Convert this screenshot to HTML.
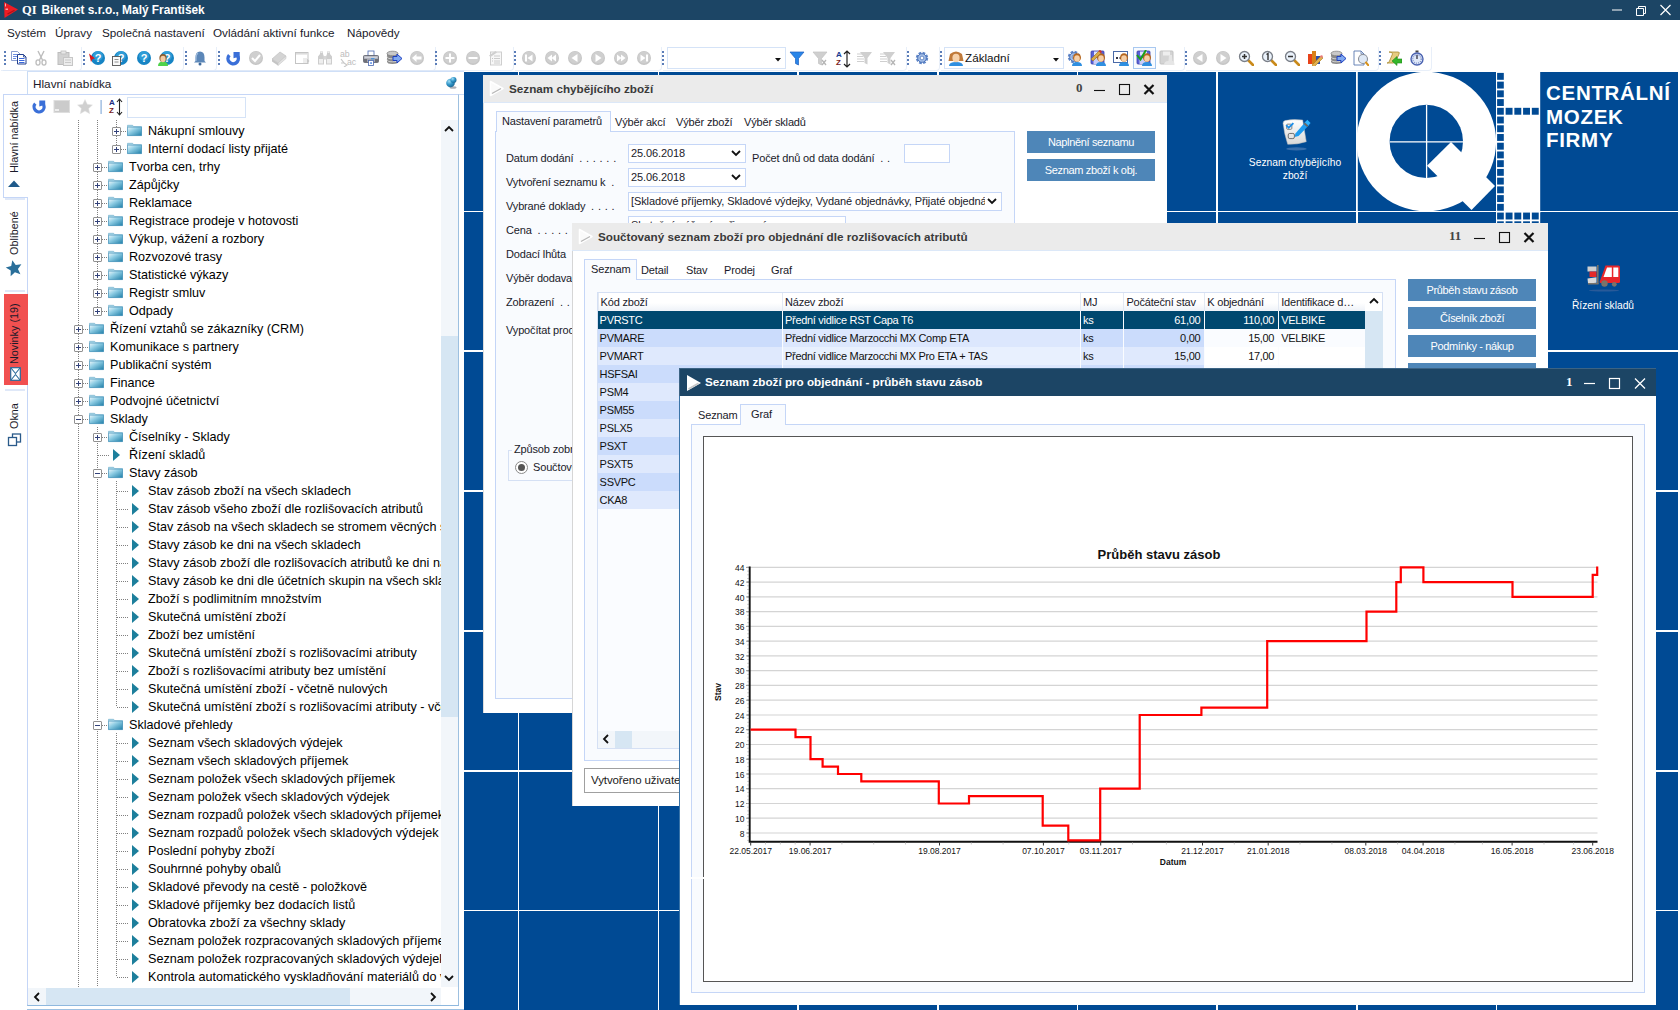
<!DOCTYPE html>
<html><head><meta charset="utf-8"><title>QI</title>
<style>
*{box-sizing:border-box;margin:0;padding:0}
html,body{width:1680px;height:1010px;overflow:hidden;background:#fff;font-family:"Liberation Sans",sans-serif;font-size:12px;color:#1a1a1a}
.abs{position:absolute}
#titlebar{position:absolute;left:0;top:0;width:1680px;height:20px;background:#1c4565}
#titlebar .t{position:absolute;left:21px;top:3px;color:#fff;font-weight:bold;font-size:11.9px;white-space:pre}
#menubar{position:absolute;left:0;top:20px;width:1680px;height:26px;background:#fff}
#menubar span{position:absolute;top:6px;font-size:11.7px;color:#1a1a2a;white-space:nowrap}
#toolbar{position:absolute;left:0;top:46px;width:1680px;height:26px;background:#fff}
#mdi{position:absolute;left:464px;top:72px;width:1216px;height:938px;background:#004a94;overflow:hidden}
.gl{position:absolute;background:#fff}
#left{position:absolute;left:0;top:72px;width:464px;height:938px;background:#fff}
#tbline{position:absolute;left:3px;top:70px;width:461px;height:1px;background:#dfe9f8}
.win{position:absolute;background:#fff}
.wt{position:absolute;left:0;top:0;right:0;height:28px;background:#ebebeb;border-bottom:1px solid #dce8f8}
.wt .cap{position:absolute;left:26px;top:7px;font-weight:bold;font-size:11.7px;color:#3a3a3a;white-space:nowrap}

#left .hdr{position:absolute;left:27px;top:-1px;width:437px;height:24px;border-left:1px solid #c9dcf5;border-bottom:1px solid #c9dcf5;border-top:1px solid #cfdff7;background:#fff}
#left .hdr span{position:absolute;left:5px;top:5px;font-size:11.75px;color:#1a1a2a}
#left .pane{position:absolute;left:27px;top:22px;width:432px;height:912px;border:1px solid #c5d6f7;border-right-color:#9dc0e0;border-bottom:2px solid #8fb8de;background:#fff}
#tree{position:absolute;left:28px;top:48px;width:413px;height:867px;overflow:hidden;background:#fff}
.tr{position:absolute;left:0;height:18px;font-size:12.6px;line-height:18px;white-space:nowrap;color:#000}
.dv{position:absolute;width:1px;background-image:linear-gradient(#808080 50%,transparent 50%);background-size:1px 2px}
.dh{position:absolute;height:1px;background-image:linear-gradient(90deg,#808080 50%,transparent 50%);background-size:2px 1px}
.pm{position:absolute;width:9px;height:9px;border:1px solid #919191;background:#fff;border-radius:1px}
.pm i{position:absolute;left:1px;top:3px;width:5px;height:1px;background:#33427a}
.pm b{position:absolute;left:3px;top:1px;width:1px;height:5px;background:#33427a}
.fo{position:absolute;width:15px;height:12.500px}
.ar{position:absolute;width:0;height:0;border-left:7px solid #1d7f9c;border-top:6px solid transparent;border-bottom:6px solid transparent}
.vt{position:absolute;transform-origin:0 0;transform:rotate(-90deg);white-space:nowrap;line-height:13px;display:block}
.vtab span{position:absolute;left:0;top:0;transform-origin:0 0;transform:rotate(-90deg);white-space:nowrap;font-size:10.8px;color:#1a1a2a;display:block}

.tile{position:absolute;color:#fff;font-size:10.25px;text-align:center;line-height:13px;white-space:nowrap}

.wicon{position:absolute;left:6px;top:5px}
.wctl{position:absolute;top:0;height:27px}
.num{position:absolute;font-family:"Liberation Serif",serif;font-weight:bold;font-size:13px;color:#444}
.tabs span{position:absolute;font-size:11px;color:#1a1a2a;white-space:nowrap;letter-spacing:-0.15px}
.tabon{position:absolute;background:#f9fbfe;border:1px solid #c5d6f7;border-bottom:none}
.page{position:absolute;background:#f9fbfe;border:1px solid #c5d6f7}
.lbl{position:absolute;font-size:11px;color:#1a1a2a;white-space:pre;letter-spacing:-0.15px}
.lbl i{font-style:normal;letter-spacing:0.35px}
.fld{position:absolute;background:#fff;border:1px solid #c5d6f7;font-size:11px;color:#1a1a2a;white-space:nowrap;overflow:hidden;letter-spacing:-0.1px}
.fld span{position:absolute;left:2px;top:2px}
.btn{position:absolute;background:#4e86b8;color:#fff;font-size:11px;text-align:center;white-space:nowrap;letter-spacing:-0.35px}
.chev{position:absolute}

.th{position:absolute;top:0;height:18px;font-size:11px;line-height:19px;color:#1a1a2a;white-space:nowrap;overflow:hidden;padding-left:2px;letter-spacing:-0.2px;background:linear-gradient(#fff,#fff 55%,#eef2f8);border-left:1px solid #e3e9f3}
.td{position:absolute;height:18px;font-size:11px;line-height:18px;color:#111;white-space:nowrap;overflow:hidden;letter-spacing:-0.3px}


.grip{position:absolute;top:4.700px;width:2px;height:14px;background-image:linear-gradient(#5b7db8 50%,transparent 50%);background-size:2px 4px}
.tbg{position:absolute;top:1px;height:24px;border:1px solid #e8eff9;border-top:none;border-left:none;border-radius:0 0 4px 0}
.ic{position:absolute;top:4px;width:16px;height:16px}
.tcombo{position:absolute;top:1px;height:22px;border:1px solid #d5e3f7;background:#fff}
</style></head><body>
<div id="titlebar"><svg class="abs" style="left:2px;top:1px" width="18" height="18" viewBox="0 0 18 18"><path d="M2 1L16 8.500L2.500 17z" fill="#ed1c24"/><path d="M5.500 13L12.500 9.300" stroke="#b01018" stroke-width="1.300"/><rect x="3" y="2.500" width="1" height="3" fill="#f8b0b0"/><rect x="3.500" y="7.500" width="2.500" height="1.500" fill="#f7a0a0"/></svg><div class="t"><span style="font-family:'Liberation Serif',serif;font-size:12.5px;position:absolute;left:1px;top:-0.5px">QI</span><span style="position:absolute;left:20.5px;top:0">Bikenet s.r.o., Malý František</span></div><svg class="abs" style="left:1610.5px;top:3px" width="66" height="14" viewBox="0 0 66 14"><path d="M1 7h10" stroke="#fff" stroke-width="1"/><path d="M25.500 5.500h7v7h-7zM27.500 5.500v-2h7v7h-2" fill="none" stroke="#fff" stroke-width="1"/><path d="M49.500 2l10 10M59.500 2l-10 10" stroke="#fff" stroke-width="1.200"/></svg></div>
<div id="menubar"><span style="left:7px">Systém</span><span style="left:55px">Úpravy</span><span style="left:102px">Společná nastavení</span><span style="left:213px">Ovládání aktivní funkce</span><span style="left:347px">Nápovědy</span></div>
<div id="toolbar"><div class="tbg" style="left:1px;width:81px"></div>
<div class="tbg" style="left:83px;width:101px"></div>
<div class="tbg" style="left:185px;width:32px"></div>
<div class="tbg" style="left:218px;width:218px"></div>
<div class="tbg" style="left:437px;width:77px"></div>
<div class="tbg" style="left:515px;width:147px"></div>
<div class="tbg" style="left:663px;width:244px"></div>
<div class="tbg" style="left:908px;width:32px"></div>
<div class="tbg" style="left:941px;width:244px"></div>
<div class="tbg" style="left:1186px;width:193px"></div>
<div class="tbg" style="left:1380px;width:52px"></div>
<div class="grip" style="left:4px"></div>
<div class="grip" style="left:83px"></div>
<div class="grip" style="left:185px"></div>
<div class="grip" style="left:218px"></div>
<div class="grip" style="left:435px"></div>
<div class="grip" style="left:514px"></div>
<div class="grip" style="left:662px"></div>
<div class="grip" style="left:907px"></div>
<div class="grip" style="left:940px"></div>
<div class="grip" style="left:1185px"></div>
<div class="grip" style="left:1379px"></div>
<svg class="ic" style="left:10.5px;width:16px" viewBox="0 0 16 16"><path d="M.5 1.500h6l2.500 2.500v6.500h-8.500z" fill="#fff" stroke="#6d86c4" stroke-width=".8"/><path d="M2 4.500h4.500M2 6.500h4.500M2 8.500h3" stroke="#5a80e0" stroke-width=".9"/><path d="M6.500 4.500h6l2.500 2.500v7h-8.500z" fill="#fff" stroke="#23408f" stroke-width="1"/><path d="M12.500 4.500v2.500h2.500" fill="none" stroke="#23408f" stroke-width=".8"/><path d="M8 8.500h5.500M8 10.500h5.500M8 12.500h5.500" stroke="#3a68dc" stroke-width="1"/></svg>
<svg class="ic" style="left:33.0px;width:16px" viewBox="0 0 16 16"><path d="M5 1l4.500 9M11 1L6.500 10" stroke="#bdbdbd" stroke-width="1.400" fill="none"/><ellipse cx="5" cy="12.500" rx="2" ry="2.600" fill="none" stroke="#bdbdbd" stroke-width="1.300"/><ellipse cx="11" cy="12.500" rx="2" ry="2.600" fill="none" stroke="#bdbdbd" stroke-width="1.300"/></svg>
<svg class="ic" style="left:57.0px;width:16px" viewBox="0 0 16 16"><rect x="1" y="2.500" width="11" height="12" fill="#d2d2d2" stroke="#bdbdbd"/><rect x="4" y="1" width="5" height="3" fill="#e8e8e8" stroke="#bdbdbd" stroke-width=".8"/><rect x="6.500" y="7.500" width="9" height="8" fill="#ececec" stroke="#c6c6c6"/><path d="M8 10h6M8 12.500h6" stroke="#c9c9c9"/></svg>
<svg class="ic" style="left:89.3px;width:18px" viewBox="0 0 18 16"><circle cx="9" cy="8" r="7" fill="#1684c4"/><circle cx="9" cy="6" r="5" fill="#3aa6de" opacity=".7"/><text x="9" y="12" font-size="11" font-weight="bold" fill="#fff" text-anchor="middle" font-family="Liberation Sans">?</text><path d="M0 3.500l6 5-2.500.5-1.500 3z" fill="#e01818"/></svg>
<svg class="ic" style="left:111.8px;width:18px" viewBox="0 0 18 16"><circle cx="9" cy="8" r="7" fill="#1684c4"/><circle cx="9" cy="6" r="5" fill="#3aa6de" opacity=".7"/><text x="9" y="12" font-size="11" font-weight="bold" fill="#fff" text-anchor="middle" font-family="Liberation Sans">?</text><rect x=".5" y="6.500" width="8" height="9" fill="#fafafa" stroke="#555" stroke-width=".9"/><path d="M2.500 9.500h4M2.500 12h4" stroke="#777" stroke-width=".8"/></svg>
<svg class="ic" style="left:135.2px;width:18px" viewBox="0 0 18 16"><circle cx="9" cy="8" r="7" fill="#1684c4"/><circle cx="9" cy="6" r="5" fill="#3aa6de" opacity=".7"/><text x="9" y="12" font-size="11" font-weight="bold" fill="#fff" text-anchor="middle" font-family="Liberation Sans">?</text></svg>
<svg class="ic" style="left:158.2px;width:18px" viewBox="0 0 18 16"><circle cx="9" cy="8" r="7" fill="#1684c4"/><circle cx="9" cy="6" r="5" fill="#3aa6de" opacity=".7"/><text x="9" y="12" font-size="11" font-weight="bold" fill="#fff" text-anchor="middle" font-family="Liberation Sans">?</text><path d="M0 16q0-4.500 5-4.500t5 4.500z" fill="#4fd24a"/><ellipse cx="5" cy="8" rx="3.600" ry="4" fill="#8a5a2a"/><ellipse cx="5" cy="9" rx="2.600" ry="3.200" fill="#f3c9a0"/></svg>
<svg class="ic" style="left:192.0px;width:16px" viewBox="0 0 16 16"><path d="M8 1.500q4.500 0 4.500 6v3.500l1.500 1.500h-12l1.500-1.500v-3.500q0-6 4.500-6z" fill="#5c87b8"/><path d="M6 3q-2 1.500-2 5v3" stroke="#9fbbdc" stroke-width="1.200" fill="none"/><circle cx="8" cy="14" r="1.500" fill="#3f6a9c"/></svg>
<svg class="ic" style="left:225.0px;width:16px" viewBox="0 0 16 16"><path d="M4.300 5.100A5.200 5.200 0 1 0 12.900 6.400" fill="none" stroke="#3a6fd8" stroke-width="3.400"/><path d="M8.500 2h6.200v5.400h-3.600l-2.600 .8z" fill="#3a6fd8"/></svg>
<svg class="ic" style="left:248.0px;width:16px" viewBox="0 0 16 16"><circle cx="8" cy="8" r="7" fill="#c6c6c6"/><circle cx="8" cy="7.500" r="6" fill="#cfcfcf"/><path d="M4 8l3 3 5-6" stroke="#fff" stroke-width="2" fill="none"/></svg>
<svg class="ic" style="left:271.0px;width:16px" viewBox="0 0 16 16"><path d="M1 9l8-7 6 4-8 7z" fill="#d4d4d4" stroke="#c2c2c2" stroke-width=".7"/><path d="M1 9v2.500l6 4v-2.500z" fill="#c4c4c4"/><path d="M7 13v2.500l8-7v-2.500z" fill="#e2e2e2" stroke="#c6c6c6" stroke-width=".6"/></svg>
<svg class="ic" style="left:294.0px;width:16px" viewBox="0 0 16 16"><rect x="1.500" y="2.500" width="12.500" height="11" fill="#fff" stroke="#c4c4c4" stroke-width="1"/><rect x="2" y="3" width="11.500" height="1.600" fill="#dcdcdc"/><path d="M9 8v5h4.500v-5z" fill="#ececec"/><path d="M13 8.500l2.500 2.500-2.500 2.500z" fill="#c8c8c8"/></svg>
<svg class="ic" style="left:317.0px;width:16px" viewBox="0 0 16 16"><path d="M3 1.500h3v2.500l1 2.500v8h-6v-8l2-2.500zM10 1.500h3v2.500l2 2.500v8h-6v-8l1-2.500z" fill="#cdcdcd"/><rect x="6.500" y="6" width="3" height="3.500" fill="#d6d6d6"/><rect x="2" y="9" width="4" height="4.500" fill="#eee"/><rect x="10" y="9" width="4" height="4.500" fill="#eee"/><path d="M3.500 2.500h2M10.500 2.500h2" stroke="#eee"/></svg>
<div class="abs" style="left:339px;top:2px;width:20px;height:22px;color:#bdbdbd;font-size:8.700px;line-height:9px"><span style="position:absolute;left:1px;top:2px">ab</span><span style="position:absolute;left:8px;top:10px">ac</span><svg style="position:absolute;left:1px;top:10px" width="8" height="9"><path d="M1 1l3 4h-3M4 5l3 2-3 2" stroke="#c8c8c8" stroke-width="1.200" fill="none"/></svg></div>
<svg class="ic" style="left:363.0px;width:16px" viewBox="0 0 16 16"><rect x="5" y="1" width="6" height="5" fill="#fff" stroke="#4a68b0" stroke-width=".8"/><rect x="0.500" y="5.500" width="15" height="7" rx="1" fill="#a4a6b0" stroke="#5b5d68" stroke-width=".8"/><rect x="1.500" y="6.500" width="13" height="1.800" fill="#d0d2da"/><rect x="1" y="9" width="3" height="3" fill="#6e7078"/><rect x="12" y="9" width="3" height="3" fill="#6e7078"/><rect x="8" y="8.200" width="3.500" height="1.100" fill="#3b8ee0"/><rect x="5.500" y="10.500" width="5" height="5" fill="#fff" stroke="#4a68b0" stroke-width=".8"/><rect x="7.300" y="12.300" width="1.500" height="1.500" fill="#2a6ee0"/></svg>
<svg class="ic" style="left:386.0px;width:16px" viewBox="0 0 16 16"><path d="M1 3.500v8q0 2.500 5.500 2.500t5.500-2.500v-8z" fill="#8a8a8a"/><ellipse cx="6.500" cy="3.500" rx="5.500" ry="2.300" fill="#c9c9c9" stroke="#777" stroke-width=".7"/><path d="M1 6.500q0 2.300 5.500 2.300t5.500-2.300M1 9.500q0 2.300 5.500 2.300t5.500-2.300" stroke="#d8d8d8" stroke-width=".9" fill="none"/><path d="M7 6.500h4v-2.500l5 4.500-5 4.500v-2.500h-4z" fill="#7fa8f0" stroke="#1d3fc0" stroke-width="1"/></svg>
<svg class="ic" style="left:409.0px;width:16px" viewBox="0 0 16 16"><circle cx="8" cy="8" r="7" fill="#c6c6c6"/><circle cx="8" cy="7.500" r="6" fill="#cfcfcf"/><path d="M3 8l4.500-4v2.500h5v3h-5v2.500z" fill="#fff"/></svg>
<svg class="ic" style="left:442.0px;width:16px" viewBox="0 0 16 16"><circle cx="8" cy="8" r="7" fill="#c6c6c6"/><circle cx="8" cy="7.500" r="6" fill="#cfcfcf"/><path d="M8 3.500v9M3.500 8h9" stroke="#fff" stroke-width="2"/></svg>
<svg class="ic" style="left:465.0px;width:16px" viewBox="0 0 16 16"><circle cx="8" cy="8" r="7" fill="#c6c6c6"/><circle cx="8" cy="7.500" r="6" fill="#cfcfcf"/><path d="M3.500 8h9" stroke="#fff" stroke-width="2"/></svg>
<svg class="ic" style="left:488.0px;width:16px" viewBox="0 0 16 16"><rect x="2.500" y="2" width="11" height="13" fill="#f7f7f7" stroke="#c9c9c9" stroke-width=".9"/><path d="M6 6h6M6 8.500h6M6 11h6M6 13h6" stroke="#c6c6c6" stroke-width=".9"/><path d="M4 8.500h1M4 11h1" stroke="#c6c6c6"/><path d="M1 5.500l6.500-4.500 1.500 1.500-6.500 4.500z" fill="#cfcfcf"/></svg>
<svg class="ic" style="left:521.0px;width:16px" viewBox="0 0 16 16"><circle cx="8" cy="8" r="7" fill="#c6c6c6"/><circle cx="8" cy="7.500" r="6" fill="#cfcfcf"/><rect x="4" y="4.500" width="2" height="7" fill="#fff"/><path d="M11.500 4.500v7l-5-3.500z" fill="#fff"/></svg>
<svg class="ic" style="left:544.0px;width:16px" viewBox="0 0 16 16"><circle cx="8" cy="8" r="7" fill="#c6c6c6"/><circle cx="8" cy="7.500" r="6" fill="#cfcfcf"/><path d="M8 4.500v7l-4.500-3.500z" fill="#fff"/><path d="M12 4.500v7l-4.500-3.500z" fill="#fff"/></svg>
<svg class="ic" style="left:567.0px;width:16px" viewBox="0 0 16 16"><circle cx="8" cy="8" r="7" fill="#c6c6c6"/><circle cx="8" cy="7.500" r="6" fill="#cfcfcf"/><path d="M10.500 4v8l-6-4z" fill="#fff"/></svg>
<svg class="ic" style="left:590.0px;width:16px" viewBox="0 0 16 16"><circle cx="8" cy="8" r="7" fill="#c6c6c6"/><circle cx="8" cy="7.500" r="6" fill="#cfcfcf"/><path d="M5.500 4v8l6-4z" fill="#fff"/></svg>
<svg class="ic" style="left:613.0px;width:16px" viewBox="0 0 16 16"><circle cx="8" cy="8" r="7" fill="#c6c6c6"/><circle cx="8" cy="7.500" r="6" fill="#cfcfcf"/><path d="M4 4.500v7l4.500-3.500z" fill="#fff"/><path d="M8 4.500v7l4.500-3.500z" fill="#fff"/></svg>
<svg class="ic" style="left:636.0px;width:16px" viewBox="0 0 16 16"><circle cx="8" cy="8" r="7" fill="#c6c6c6"/><circle cx="8" cy="7.500" r="6" fill="#cfcfcf"/><rect x="10" y="4.500" width="2" height="7" fill="#fff"/><path d="M4.500 4.500v7l5-3.500z" fill="#fff"/></svg>
<div class="tcombo" style="left:666.500px;width:119px"></div>
<svg class="abs" style="left:775px;top:12px" width="7" height="4"><path d="M0 0h6l-3 3.500z" fill="#111"/></svg>
<svg class="ic" style="left:789.0px;width:16px" viewBox="0 0 16 16"><path d="M1 2h14l-5.500 6.500v6.500l-3-1.500v-5z" fill="#2a86e8" stroke="#1c5fc0" stroke-width=".7"/></svg>
<svg class="ic" style="left:812.0px;width:16px" viewBox="0 0 16 16"><path d="M1 2h14l-5.500 6.500v6.500l-3-1.500v-5z" fill="#cfcfcf" stroke="#c2c2c2" stroke-width=".7"/><path d="M10 10l4 5M14 10l-4 5" stroke="#b5b5b5" stroke-width="1.300"/></svg>
<div class="abs" style="left:835px;top:3px;width:18px;height:20px"><span style="position:absolute;left:1px;top:1px;font-size:8px;font-weight:bold;color:#1c3c90;line-height:9px">A</span><span style="position:absolute;left:1px;top:9px;font-size:8px;font-weight:bold;color:#7a1c1c;line-height:9px">Z</span><svg style="position:absolute;left:8px;top:1px" width="8" height="18"><path d="M4 1v16M1 4l3-3 3 3M1 14l3 3 3-3" stroke="#222" fill="none" stroke-width="1.200"/></svg></div>
<svg class="ic" style="left:857.0px;width:16px" viewBox="0 0 16 16"><path d="M0 4h5M0 6.500h6M0 9h7M0 11.500h7" stroke="#cfcfcf"/><path d="M3 2h12l-4.500 6v6.500l-3-1.500v-5z" fill="#cfcfcf"/></svg>
<svg class="ic" style="left:880.0px;width:16px" viewBox="0 0 16 16"><path d="M0 4h5M0 6.500h6M0 9h7M0 11.500h7" stroke="#cfcfcf"/><path d="M3 2h12l-4.500 6v6.500l-3-1.500v-5z" fill="#cfcfcf"/><path d="M11 10l4 5M15 10l-4 5" stroke="#b5b5b5" stroke-width="1.300"/></svg>
<svg class="ic" style="left:914.0px;width:16px" viewBox="0 0 16 16"><g transform="translate(1,1)"><circle cx="7" cy="7" r="4.600" fill="none" stroke="#5f86c8" stroke-width="3.200" stroke-dasharray="2.400 1.210"/><circle cx="7" cy="7" r="4.300" fill="#a8c2ea" stroke="#4a72b8" stroke-width="1"/><circle cx="7" cy="7" r="1.900" fill="#fff" stroke="#4a72b8" stroke-width=".8"/></g></svg>
<div class="tcombo" style="left:944px;width:119.500px"><span style="position:absolute;left:20px;top:2.500px;font-size:11.700px;color:#111">Základní</span></div>
<svg class="abs" style="left:948px;top:5px" width="16" height="15" viewBox="0 0 16 15"><path d="M1 15q0-4 7-4t7 4z" fill="#2f8fe0"/><path d="M2 3q6-5 12 0l1.500 7h-15z" fill="#c07a3a"/><ellipse cx="8" cy="7" rx="3.600" ry="4.200" fill="#f6d2ac"/></svg>
<svg class="abs" style="left:1053px;top:12px" width="7" height="4"><path d="M0 0h6l-3 3.500z" fill="#111"/></svg>
<svg class="ic" style="left:1067.0px;width:16px" viewBox="0 0 16 16"><g transform="translate(0,0)"><circle cx="7" cy="7" r="4.600" fill="none" stroke="#5f86c8" stroke-width="3.200" stroke-dasharray="2.400 1.210"/><circle cx="7" cy="7" r="4.300" fill="#a8c2ea" stroke="#4a72b8" stroke-width="1"/><circle cx="7" cy="7" r="1.900" fill="#fff" stroke="#4a72b8" stroke-width=".8"/></g><g transform="translate(4,2)"><path d="M1 14q0-4 5-4t5 4z" fill="#2f8fe0"/><ellipse cx="6" cy="5.500" rx="4" ry="4.300" fill="#b5651d"/><ellipse cx="6" cy="6.500" rx="2.800" ry="3.300" fill="#f6cfa6"/></g></svg>
<svg class="ic" style="left:1090.0px;width:16px" viewBox="0 0 16 16"><rect x="1" y="1" width="13" height="13" rx="1" fill="#5a62d8" stroke="#3a3fa8" stroke-width=".8"/><rect x="4" y="1.500" width="7" height="4" fill="#dfe3ff"/><rect x="3.500" y="8" width="8" height="6" fill="#c9cdf8"/><g transform="translate(5,2)"><path d="M1 14q0-4 5-4t5 4z" fill="#2f8fe0"/><ellipse cx="6" cy="5.500" rx="4" ry="4.300" fill="#b5651d"/><ellipse cx="6" cy="6.500" rx="2.800" ry="3.300" fill="#f6cfa6"/></g><path d="M1 9l8-8 2 2-8 8z" fill="#d9a94a" stroke="#9a6f1a" stroke-width=".6"/><path d="M8.500 1l1.500-1.200 2 2-1.200 1.500z" fill="#d03030"/></svg>
<svg class="ic" style="left:1113.0px;width:16px" viewBox="0 0 16 16"><rect x=".5" y="1.500" width="14" height="11" fill="#fff" stroke="#4a6aa8" stroke-width="1"/><rect x="3" y="7" width="2" height="2" fill="#334"/><rect x="6.500" y="7" width="2" height="2" fill="#334"/><g transform="translate(5,2)"><path d="M1 14q0-4 5-4t5 4z" fill="#2f8fe0"/><ellipse cx="6" cy="5.500" rx="4" ry="4.300" fill="#b5651d"/><ellipse cx="6" cy="6.500" rx="2.800" ry="3.300" fill="#f6cfa6"/></g></svg>
<div class="abs" style="left:1133px;top:1px;width:23px;height:22px;border:1px solid #a8c8f0;background:#f8fbff"></div>
<svg class="ic" style="left:1136.0px;width:16px" viewBox="0 0 16 16"><rect x="1" y="1" width="13" height="13" rx="1" fill="#5a62d8" stroke="#3a3fa8" stroke-width=".8"/><rect x="4" y="1.500" width="7" height="4" fill="#dfe3ff"/><rect x="3.500" y="8" width="8" height="6" fill="#c9cdf8"/><g transform="translate(5,2)"><path d="M1 14q0-4 5-4t5 4z" fill="#2f8fe0"/><ellipse cx="6" cy="5.500" rx="4" ry="4.300" fill="#b5651d"/><ellipse cx="6" cy="6.500" rx="2.800" ry="3.300" fill="#f6cfa6"/></g><path d="M1 5l3.500 4.500L10 0" stroke="#18a018" stroke-width="2" fill="none"/></svg>
<svg class="ic" style="left:1159.0px;width:16px" viewBox="0 0 16 16"><rect x="1" y="1" width="13" height="13" rx="1" fill="#d4d4d4" stroke="#c2c2c2"/><rect x="4" y="1.500" width="7" height="4" fill="#eee"/><path d="M5 15q0-4 4.500-4l.5-6h3l.5 6q2 0 2 4z" fill="#e6e6e6"/></svg>
<svg class="ic" style="left:1192.0px;width:16px" viewBox="0 0 16 16"><circle cx="8" cy="8" r="7" fill="#c6c6c6"/><circle cx="8" cy="7.500" r="6" fill="#cfcfcf"/><path d="M10.500 4v8l-6-4z" fill="#fff"/></svg>
<svg class="ic" style="left:1215.0px;width:16px" viewBox="0 0 16 16"><circle cx="8" cy="8" r="7" fill="#c6c6c6"/><circle cx="8" cy="7.500" r="6" fill="#cfcfcf"/><path d="M5.500 4v8l6-4z" fill="#fff"/></svg>
<svg class="ic" style="left:1238.0px;width:16px" viewBox="0 0 16 16"><path d="M10 10l5 5" stroke="#c98a1a" stroke-width="2.600" stroke-linecap="round"/><circle cx="6.500" cy="6.500" r="5" fill="#eaf2fb" stroke="#7a7f88" stroke-width="1.300"/><path d="M4 6.500h5M6.500 4v5" stroke="#333" stroke-width="1.500"/></svg>
<svg class="ic" style="left:1261.0px;width:16px" viewBox="0 0 16 16"><path d="M10 10l5 5" stroke="#c98a1a" stroke-width="2.600" stroke-linecap="round"/><circle cx="6.500" cy="6.500" r="5" fill="#eaf2fb" stroke="#7a7f88" stroke-width="1.300"/><path d="M5.500 4.500l1.500-1v6.500" stroke="#333" stroke-width="1.400" fill="none"/></svg>
<svg class="ic" style="left:1284.0px;width:16px" viewBox="0 0 16 16"><path d="M10 10l5 5" stroke="#c98a1a" stroke-width="2.600" stroke-linecap="round"/><circle cx="6.500" cy="6.500" r="5" fill="#eaf2fb" stroke="#7a7f88" stroke-width="1.300"/><path d="M4 6.500h5" stroke="#333" stroke-width="1.500"/></svg>
<svg class="ic" style="left:1307.0px;width:16px" viewBox="0 0 16 16"><rect x="1" y="4" width="4" height="10" fill="#e8431a"/><rect x="5" y="1" width="4" height="13" fill="#d9821a"/><rect x="9" y="6" width="4" height="8" fill="#2a4fb0"/><path d="M5 15l9-9 2 2-9 9z" fill="#e0b050" stroke="#a87a1a" stroke-width=".6"/><circle cx="14.500" cy="6.500" r="1.300" fill="#e87a7a"/></svg>
<svg class="ic" style="left:1330.0px;width:16px" viewBox="0 0 16 16"><path d="M1 3.500v8q0 2.500 5.500 2.500t5.500-2.500v-8z" fill="#8a8a8a"/><ellipse cx="6.500" cy="3.500" rx="5.500" ry="2.300" fill="#c9c9c9" stroke="#777" stroke-width=".7"/><path d="M1 6.500q0 2.300 5.500 2.300t5.500-2.300M1 9.500q0 2.300 5.500 2.300t5.500-2.300" stroke="#d8d8d8" stroke-width=".9" fill="none"/><path d="M7 6.500h4v-2.500l5 4.500-5 4.500v-2.500h-4z" fill="#7fa8f0" stroke="#1d3fc0" stroke-width="1"/></svg>
<svg class="ic" style="left:1353.0px;width:16px" viewBox="0 0 16 16"><path d="M1 1h7l3 3v11h-10z" fill="#fff" stroke="#5a78b0" stroke-width=".9"/><path d="M8 1v3h3" fill="none" stroke="#5a78b0" stroke-width=".8"/><circle cx="10" cy="9" r="4.500" fill="#dfe9f6" stroke="#8a8f98" stroke-width="1.100"/><path d="M13 12.500l2.500 3" stroke="#d9921a" stroke-width="2" stroke-linecap="round"/></svg>
<svg class="ic" style="left:1386.0px;width:16px" viewBox="0 0 16 16"><path d="M3 2h9q2 0 1 2l-3 7q-.5 2-3 2h-6q2 0 2.500-2l3-7q.5-2-3.500-2z" fill="#e6cc80" stroke="#a88a30" stroke-width=".8"/><path d="M6 11l5-4.500v2.500h5v4h-5v2.500z" fill="#35b52a" stroke="#1d8a18" stroke-width=".6"/></svg>
<svg class="ic" style="left:1409.0px;width:16px" viewBox="0 0 16 16"><rect x="6.500" y="0.500" width="3" height="2" fill="#444"/><circle cx="8" cy="9" r="6" fill="#dfe8f8" stroke="#4a62b0" stroke-width="1.400"/><path d="M8 5v4" stroke="#223" stroke-width="1.200"/><circle cx="8" cy="9" r="4.200" fill="none" stroke="#4a62b0" stroke-width="1" stroke-dasharray="1 1.200"/></svg></div>
<div id="left"><div class="hdr"><span>Hlavní nabídka</span>
<svg style="position:absolute;left:415px;top:3px" width="16" height="16" viewBox="0 0 16 16"><defs><radialGradient id="pin1" cx=".35" cy=".3" r=".8"><stop offset="0" stop-color="#9fdcf5"/><stop offset=".5" stop-color="#2f95c8"/><stop offset="1" stop-color="#1a5f8a"/></radialGradient></defs><ellipse cx="10" cy="12.500" rx="3.500" ry="1.300" fill="#8a8f98" opacity=".7"/><circle cx="7.500" cy="8" r="4.300" fill="url(#pin1)"/><circle cx="10.500" cy="5" r="3" fill="url(#pin1)"/></svg>
</div>
<div class="pane"></div>
<div class="abs" style="left:3px;top:22px;width:25px;height:104px;background:#fff;border:1px solid #c5d6f7;border-right:none"></div>
<span class="vt" style="left:8.0px;top:100.5px;font-size:10.8px;color:#1a1a2a">Hlavní nabídka</span>
<svg class="abs" style="left:7px;top:107px" width="14" height="9"><path d="M1 8L7 1.500L13 8z" fill="#1f5a8a"/></svg>
<span class="vt" style="left:8.0px;top:182.5px;font-size:10.8px;color:#1a1a2a">Oblíbené</span>
<svg class="abs" style="left:5px;top:187px" width="18" height="18" viewBox="0 0 18 18"><path transform="rotate(-12 9 9)" d="M9 1l2.300 5.400 5.700.500-4.300 3.800 1.300 5.700L9 13.400 4 16.400l1.300-5.700L1 6.900l5.700-.500z" fill="#2a6f9a"/></svg>
<div class="abs" style="left:4px;top:222px;width:24px;height:91px;background:#f15050"></div>
<span class="vt" style="left:8.0px;top:291.5px;font-size:10.8px;color:#1a1a2a">Novinky (19)</span>
<svg class="abs" style="left:10px;top:295px" width="11" height="14" viewBox="0 0 11 14"><rect x=".7" y=".7" width="9.600" height="12.600" fill="#fff" stroke="#2a6a9a" stroke-width="1.200"/><path d="M1 13l4.500-5.500 4.500 5.500M1 1l4.500 5.500 4.500-5.500" stroke="#2a6a9a" fill="none" stroke-width="1.100"/></svg>
<span class="vt" style="left:8.0px;top:357.0px;font-size:10.8px;color:#1a1a2a">Okna</span>
<svg class="abs" style="left:7px;top:361px" width="16" height="14" viewBox="0 0 16 14"><rect x="5.500" y="1" width="8" height="8" fill="#fff" stroke="#2a5a8a" stroke-width="1.300"/><rect x="1.500" y="4.500" width="8" height="8" fill="#fff" stroke="#2a5a8a" stroke-width="1.300"/></svg>
<div class="abs" style="left:5px;top:126px;width:20px;height:2px;background:#dfe8f8"></div>
<div class="abs" style="left:5px;top:218px;width:20px;height:2px;background:#dfe8f8"></div>
<div class="abs" style="left:5px;top:317px;width:20px;height:2px;background:#dfe8f8"></div>
<svg class="abs" style="left:31px;top:26px" width="90" height="18" viewBox="0 0 90 18"><path d="M4.300 5.600A5 5 0 1 0 12.600 6.800" fill="none" stroke="#3a6fd8" stroke-width="3.200"/><path d="M8.300 2.500h5.900v5.200h-3.400l-2.500 .8z" fill="#3a6fd8"/><rect x="23" y="2.500" width="15.500" height="12" fill="#cbcbcb" stroke="#dedede"/><rect x="24" y="11" width="4" height="2" fill="#eee"/><path d="M54 1.500l2.300 4.800 5.200.600-3.800 3.600 1 5.200-4.700-2.600-4.700 2.600 1-5.200-3.800-3.600 5.200-.600z" fill="#d0d0d0" stroke="#e4e4e4" stroke-width=".5"/><rect x="69.500" y="2" width="1.200" height="14" fill="#8ab0dc"/></svg>
<div class="abs" style="left:108px;top:26px;width:18px;height:18px"><span style="position:absolute;left:1px;top:1px;font-size:8px;line-height:8px;font-weight:bold;color:#1c2c80">A</span><span style="position:absolute;left:1px;top:9px;font-size:8px;line-height:8px;font-weight:bold;color:#7a1c1c">Z</span><svg style="position:absolute;left:8px;top:0px" width="7" height="18"><path d="M3.500 1v16M1 4l2.500-3 2.500 3M1 14l2.500 3 2.500-3" stroke="#222" fill="none" stroke-width="1.100"/></svg></div>
<div class="abs" style="left:126.500px;top:24.500px;width:119.500px;height:21.500px;border:1px solid #d5e3f7;background:#fff"></div>
<div id="tree">
<div class="dv" style="left:50px;top:0;height:868px"></div>
<div class="dv" style="left:69px;top:0;height:191px"></div>
<div class="dv" style="left:69px;top:307px;height:561px"></div>
<div class="dv" style="left:88px;top:0;height:29px"></div>
<div class="dv" style="left:88px;top:361px;height:226px"></div>
<div class="dv" style="left:88px;top:613px;height:244px"></div>
<div class="dh" style="left:93px;top:11px;width:7px"></div>
<div class="pm" style="left:84px;top:7px"><i></i><b></b></div>
<svg class="fo" style="left:99px;top:4px" viewBox="0 0 16 13"><defs><linearGradient id="fg1" x1="0" y1="0" x2="1" y2="1"><stop offset="0" stop-color="#eef8fc"/><stop offset="0.4" stop-color="#8fcde4"/><stop offset="1" stop-color="#1f7fa8"/></linearGradient></defs><path d="M0.500 1.200h5.500l1 1.300h8.500v9.500h-15z" fill="#a9d6e8" stroke="#6aa9c8" stroke-width="0.600"/><path d="M0.500 3.200h15v9h-15z" fill="url(#fg1)" stroke="#3f8db5" stroke-width="0.600"/></svg>
<div class="tr" style="left:120px;top:2px">Nákupní smlouvy</div>
<div class="dh" style="left:93px;top:29px;width:7px"></div>
<div class="pm" style="left:84px;top:25px"><i></i><b></b></div>
<svg class="fo" style="left:99px;top:22px" viewBox="0 0 16 13"><defs><linearGradient id="fg2" x1="0" y1="0" x2="1" y2="1"><stop offset="0" stop-color="#eef8fc"/><stop offset="0.4" stop-color="#8fcde4"/><stop offset="1" stop-color="#1f7fa8"/></linearGradient></defs><path d="M0.500 1.200h5.500l1 1.300h8.500v9.500h-15z" fill="#a9d6e8" stroke="#6aa9c8" stroke-width="0.600"/><path d="M0.500 3.200h15v9h-15z" fill="url(#fg2)" stroke="#3f8db5" stroke-width="0.600"/></svg>
<div class="tr" style="left:120px;top:20px">Interní dodací listy přijaté</div>
<div class="dh" style="left:74px;top:47px;width:7px"></div>
<div class="pm" style="left:65px;top:43px"><i></i><b></b></div>
<svg class="fo" style="left:80px;top:40px" viewBox="0 0 16 13"><defs><linearGradient id="fg3" x1="0" y1="0" x2="1" y2="1"><stop offset="0" stop-color="#eef8fc"/><stop offset="0.4" stop-color="#8fcde4"/><stop offset="1" stop-color="#1f7fa8"/></linearGradient></defs><path d="M0.500 1.200h5.500l1 1.300h8.500v9.500h-15z" fill="#a9d6e8" stroke="#6aa9c8" stroke-width="0.600"/><path d="M0.500 3.200h15v9h-15z" fill="url(#fg3)" stroke="#3f8db5" stroke-width="0.600"/></svg>
<div class="tr" style="left:101px;top:38px">Tvorba cen, trhy</div>
<div class="dh" style="left:74px;top:65px;width:7px"></div>
<div class="pm" style="left:65px;top:61px"><i></i><b></b></div>
<svg class="fo" style="left:80px;top:58px" viewBox="0 0 16 13"><defs><linearGradient id="fg4" x1="0" y1="0" x2="1" y2="1"><stop offset="0" stop-color="#eef8fc"/><stop offset="0.4" stop-color="#8fcde4"/><stop offset="1" stop-color="#1f7fa8"/></linearGradient></defs><path d="M0.500 1.200h5.500l1 1.300h8.500v9.500h-15z" fill="#a9d6e8" stroke="#6aa9c8" stroke-width="0.600"/><path d="M0.500 3.200h15v9h-15z" fill="url(#fg4)" stroke="#3f8db5" stroke-width="0.600"/></svg>
<div class="tr" style="left:101px;top:56px">Zápůjčky</div>
<div class="dh" style="left:74px;top:83px;width:7px"></div>
<div class="pm" style="left:65px;top:79px"><i></i><b></b></div>
<svg class="fo" style="left:80px;top:76px" viewBox="0 0 16 13"><defs><linearGradient id="fg5" x1="0" y1="0" x2="1" y2="1"><stop offset="0" stop-color="#eef8fc"/><stop offset="0.4" stop-color="#8fcde4"/><stop offset="1" stop-color="#1f7fa8"/></linearGradient></defs><path d="M0.500 1.200h5.500l1 1.300h8.500v9.500h-15z" fill="#a9d6e8" stroke="#6aa9c8" stroke-width="0.600"/><path d="M0.500 3.200h15v9h-15z" fill="url(#fg5)" stroke="#3f8db5" stroke-width="0.600"/></svg>
<div class="tr" style="left:101px;top:74px">Reklamace</div>
<div class="dh" style="left:74px;top:101px;width:7px"></div>
<div class="pm" style="left:65px;top:97px"><i></i><b></b></div>
<svg class="fo" style="left:80px;top:94px" viewBox="0 0 16 13"><defs><linearGradient id="fg6" x1="0" y1="0" x2="1" y2="1"><stop offset="0" stop-color="#eef8fc"/><stop offset="0.4" stop-color="#8fcde4"/><stop offset="1" stop-color="#1f7fa8"/></linearGradient></defs><path d="M0.500 1.200h5.500l1 1.300h8.500v9.500h-15z" fill="#a9d6e8" stroke="#6aa9c8" stroke-width="0.600"/><path d="M0.500 3.200h15v9h-15z" fill="url(#fg6)" stroke="#3f8db5" stroke-width="0.600"/></svg>
<div class="tr" style="left:101px;top:92px">Registrace prodeje v hotovosti</div>
<div class="dh" style="left:74px;top:119px;width:7px"></div>
<div class="pm" style="left:65px;top:115px"><i></i><b></b></div>
<svg class="fo" style="left:80px;top:112px" viewBox="0 0 16 13"><defs><linearGradient id="fg7" x1="0" y1="0" x2="1" y2="1"><stop offset="0" stop-color="#eef8fc"/><stop offset="0.4" stop-color="#8fcde4"/><stop offset="1" stop-color="#1f7fa8"/></linearGradient></defs><path d="M0.500 1.200h5.500l1 1.300h8.500v9.500h-15z" fill="#a9d6e8" stroke="#6aa9c8" stroke-width="0.600"/><path d="M0.500 3.200h15v9h-15z" fill="url(#fg7)" stroke="#3f8db5" stroke-width="0.600"/></svg>
<div class="tr" style="left:101px;top:110px">Výkup, vážení a rozbory</div>
<div class="dh" style="left:74px;top:137px;width:7px"></div>
<div class="pm" style="left:65px;top:133px"><i></i><b></b></div>
<svg class="fo" style="left:80px;top:130px" viewBox="0 0 16 13"><defs><linearGradient id="fg8" x1="0" y1="0" x2="1" y2="1"><stop offset="0" stop-color="#eef8fc"/><stop offset="0.4" stop-color="#8fcde4"/><stop offset="1" stop-color="#1f7fa8"/></linearGradient></defs><path d="M0.500 1.200h5.500l1 1.300h8.500v9.500h-15z" fill="#a9d6e8" stroke="#6aa9c8" stroke-width="0.600"/><path d="M0.500 3.200h15v9h-15z" fill="url(#fg8)" stroke="#3f8db5" stroke-width="0.600"/></svg>
<div class="tr" style="left:101px;top:128px">Rozvozové trasy</div>
<div class="dh" style="left:74px;top:155px;width:7px"></div>
<div class="pm" style="left:65px;top:151px"><i></i><b></b></div>
<svg class="fo" style="left:80px;top:148px" viewBox="0 0 16 13"><defs><linearGradient id="fg9" x1="0" y1="0" x2="1" y2="1"><stop offset="0" stop-color="#eef8fc"/><stop offset="0.4" stop-color="#8fcde4"/><stop offset="1" stop-color="#1f7fa8"/></linearGradient></defs><path d="M0.500 1.200h5.500l1 1.300h8.500v9.500h-15z" fill="#a9d6e8" stroke="#6aa9c8" stroke-width="0.600"/><path d="M0.500 3.200h15v9h-15z" fill="url(#fg9)" stroke="#3f8db5" stroke-width="0.600"/></svg>
<div class="tr" style="left:101px;top:146px">Statistické výkazy</div>
<div class="dh" style="left:74px;top:173px;width:7px"></div>
<div class="pm" style="left:65px;top:169px"><i></i><b></b></div>
<svg class="fo" style="left:80px;top:166px" viewBox="0 0 16 13"><defs><linearGradient id="fg10" x1="0" y1="0" x2="1" y2="1"><stop offset="0" stop-color="#eef8fc"/><stop offset="0.4" stop-color="#8fcde4"/><stop offset="1" stop-color="#1f7fa8"/></linearGradient></defs><path d="M0.500 1.200h5.500l1 1.300h8.500v9.500h-15z" fill="#a9d6e8" stroke="#6aa9c8" stroke-width="0.600"/><path d="M0.500 3.200h15v9h-15z" fill="url(#fg10)" stroke="#3f8db5" stroke-width="0.600"/></svg>
<div class="tr" style="left:101px;top:164px">Registr smluv</div>
<div class="dh" style="left:74px;top:191px;width:7px"></div>
<div class="pm" style="left:65px;top:187px"><i></i><b></b></div>
<svg class="fo" style="left:80px;top:184px" viewBox="0 0 16 13"><defs><linearGradient id="fg11" x1="0" y1="0" x2="1" y2="1"><stop offset="0" stop-color="#eef8fc"/><stop offset="0.4" stop-color="#8fcde4"/><stop offset="1" stop-color="#1f7fa8"/></linearGradient></defs><path d="M0.500 1.200h5.500l1 1.300h8.500v9.500h-15z" fill="#a9d6e8" stroke="#6aa9c8" stroke-width="0.600"/><path d="M0.500 3.200h15v9h-15z" fill="url(#fg11)" stroke="#3f8db5" stroke-width="0.600"/></svg>
<div class="tr" style="left:101px;top:182px">Odpady</div>
<div class="dh" style="left:55px;top:209px;width:7px"></div>
<div class="pm" style="left:46px;top:205px"><i></i><b></b></div>
<svg class="fo" style="left:61px;top:202px" viewBox="0 0 16 13"><defs><linearGradient id="fg12" x1="0" y1="0" x2="1" y2="1"><stop offset="0" stop-color="#eef8fc"/><stop offset="0.4" stop-color="#8fcde4"/><stop offset="1" stop-color="#1f7fa8"/></linearGradient></defs><path d="M0.500 1.200h5.500l1 1.300h8.500v9.500h-15z" fill="#a9d6e8" stroke="#6aa9c8" stroke-width="0.600"/><path d="M0.500 3.200h15v9h-15z" fill="url(#fg12)" stroke="#3f8db5" stroke-width="0.600"/></svg>
<div class="tr" style="left:82px;top:200px">Řízení vztahů se zákazníky (CRM)</div>
<div class="dh" style="left:55px;top:227px;width:7px"></div>
<div class="pm" style="left:46px;top:223px"><i></i><b></b></div>
<svg class="fo" style="left:61px;top:220px" viewBox="0 0 16 13"><defs><linearGradient id="fg13" x1="0" y1="0" x2="1" y2="1"><stop offset="0" stop-color="#eef8fc"/><stop offset="0.4" stop-color="#8fcde4"/><stop offset="1" stop-color="#1f7fa8"/></linearGradient></defs><path d="M0.500 1.200h5.500l1 1.300h8.500v9.500h-15z" fill="#a9d6e8" stroke="#6aa9c8" stroke-width="0.600"/><path d="M0.500 3.200h15v9h-15z" fill="url(#fg13)" stroke="#3f8db5" stroke-width="0.600"/></svg>
<div class="tr" style="left:82px;top:218px">Komunikace s partnery</div>
<div class="dh" style="left:55px;top:245px;width:7px"></div>
<div class="pm" style="left:46px;top:241px"><i></i><b></b></div>
<svg class="fo" style="left:61px;top:238px" viewBox="0 0 16 13"><defs><linearGradient id="fg14" x1="0" y1="0" x2="1" y2="1"><stop offset="0" stop-color="#eef8fc"/><stop offset="0.4" stop-color="#8fcde4"/><stop offset="1" stop-color="#1f7fa8"/></linearGradient></defs><path d="M0.500 1.200h5.500l1 1.300h8.500v9.500h-15z" fill="#a9d6e8" stroke="#6aa9c8" stroke-width="0.600"/><path d="M0.500 3.200h15v9h-15z" fill="url(#fg14)" stroke="#3f8db5" stroke-width="0.600"/></svg>
<div class="tr" style="left:82px;top:236px">Publikační systém</div>
<div class="dh" style="left:55px;top:263px;width:7px"></div>
<div class="pm" style="left:46px;top:259px"><i></i><b></b></div>
<svg class="fo" style="left:61px;top:256px" viewBox="0 0 16 13"><defs><linearGradient id="fg15" x1="0" y1="0" x2="1" y2="1"><stop offset="0" stop-color="#eef8fc"/><stop offset="0.4" stop-color="#8fcde4"/><stop offset="1" stop-color="#1f7fa8"/></linearGradient></defs><path d="M0.500 1.200h5.500l1 1.300h8.500v9.500h-15z" fill="#a9d6e8" stroke="#6aa9c8" stroke-width="0.600"/><path d="M0.500 3.200h15v9h-15z" fill="url(#fg15)" stroke="#3f8db5" stroke-width="0.600"/></svg>
<div class="tr" style="left:82px;top:254px">Finance</div>
<div class="dh" style="left:55px;top:281px;width:7px"></div>
<div class="pm" style="left:46px;top:277px"><i></i><b></b></div>
<svg class="fo" style="left:61px;top:274px" viewBox="0 0 16 13"><defs><linearGradient id="fg16" x1="0" y1="0" x2="1" y2="1"><stop offset="0" stop-color="#eef8fc"/><stop offset="0.4" stop-color="#8fcde4"/><stop offset="1" stop-color="#1f7fa8"/></linearGradient></defs><path d="M0.500 1.200h5.500l1 1.300h8.500v9.500h-15z" fill="#a9d6e8" stroke="#6aa9c8" stroke-width="0.600"/><path d="M0.500 3.200h15v9h-15z" fill="url(#fg16)" stroke="#3f8db5" stroke-width="0.600"/></svg>
<div class="tr" style="left:82px;top:272px">Podvojné účetnictví</div>
<div class="dh" style="left:55px;top:299px;width:7px"></div>
<div class="pm" style="left:46px;top:295px"><i></i></div>
<svg class="fo" style="left:61px;top:292px" viewBox="0 0 16 13"><defs><linearGradient id="fg17" x1="0" y1="0" x2="1" y2="1"><stop offset="0" stop-color="#eef8fc"/><stop offset="0.4" stop-color="#8fcde4"/><stop offset="1" stop-color="#1f7fa8"/></linearGradient></defs><path d="M0.500 1.200h5.500l1 1.300h8.500v9.500h-15z" fill="#a9d6e8" stroke="#6aa9c8" stroke-width="0.600"/><path d="M0.500 3.200h15v9h-15z" fill="url(#fg17)" stroke="#3f8db5" stroke-width="0.600"/></svg>
<div class="tr" style="left:82px;top:290px">Sklady</div>
<div class="dh" style="left:74px;top:317px;width:7px"></div>
<div class="pm" style="left:65px;top:313px"><i></i><b></b></div>
<svg class="fo" style="left:80px;top:310px" viewBox="0 0 16 13"><defs><linearGradient id="fg18" x1="0" y1="0" x2="1" y2="1"><stop offset="0" stop-color="#eef8fc"/><stop offset="0.4" stop-color="#8fcde4"/><stop offset="1" stop-color="#1f7fa8"/></linearGradient></defs><path d="M0.500 1.200h5.500l1 1.300h8.500v9.500h-15z" fill="#a9d6e8" stroke="#6aa9c8" stroke-width="0.600"/><path d="M0.500 3.200h15v9h-15z" fill="url(#fg18)" stroke="#3f8db5" stroke-width="0.600"/></svg>
<div class="tr" style="left:101px;top:308px">Číselníky - Sklady</div>
<div class="dh" style="left:70px;top:335px;width:11px"></div>
<div class="ar" style="left:85px;top:329px"></div>
<div class="tr" style="left:101px;top:326px">Řízení skladů</div>
<div class="dh" style="left:74px;top:353px;width:7px"></div>
<div class="pm" style="left:65px;top:349px"><i></i></div>
<svg class="fo" style="left:80px;top:346px" viewBox="0 0 16 13"><defs><linearGradient id="fg19" x1="0" y1="0" x2="1" y2="1"><stop offset="0" stop-color="#eef8fc"/><stop offset="0.4" stop-color="#8fcde4"/><stop offset="1" stop-color="#1f7fa8"/></linearGradient></defs><path d="M0.500 1.200h5.500l1 1.300h8.500v9.500h-15z" fill="#a9d6e8" stroke="#6aa9c8" stroke-width="0.600"/><path d="M0.500 3.200h15v9h-15z" fill="url(#fg19)" stroke="#3f8db5" stroke-width="0.600"/></svg>
<div class="tr" style="left:101px;top:344px">Stavy zásob</div>
<div class="dh" style="left:89px;top:371px;width:11px"></div>
<div class="ar" style="left:104px;top:365px"></div>
<div class="tr" style="left:120px;top:362px">Stav zásob zboží na všech skladech</div>
<div class="dh" style="left:89px;top:389px;width:11px"></div>
<div class="ar" style="left:104px;top:383px"></div>
<div class="tr" style="left:120px;top:380px">Stav zásob všeho zboží dle rozlišovacích atributů</div>
<div class="dh" style="left:89px;top:407px;width:11px"></div>
<div class="ar" style="left:104px;top:401px"></div>
<div class="tr" style="left:120px;top:398px">Stav zásob na všech skladech se stromem věcných skupin</div>
<div class="dh" style="left:89px;top:425px;width:11px"></div>
<div class="ar" style="left:104px;top:419px"></div>
<div class="tr" style="left:120px;top:416px">Stavy zásob ke dni na všech skladech</div>
<div class="dh" style="left:89px;top:443px;width:11px"></div>
<div class="ar" style="left:104px;top:437px"></div>
<div class="tr" style="left:120px;top:434px">Stavy zásob zboží dle rozlišovacích atributů ke dni na všech</div>
<div class="dh" style="left:89px;top:461px;width:11px"></div>
<div class="ar" style="left:104px;top:455px"></div>
<div class="tr" style="left:120px;top:452px">Stavy zásob ke dni dle účetních skupin na všech skladech</div>
<div class="dh" style="left:89px;top:479px;width:11px"></div>
<div class="ar" style="left:104px;top:473px"></div>
<div class="tr" style="left:120px;top:470px">Zboží s podlimitním množstvím</div>
<div class="dh" style="left:89px;top:497px;width:11px"></div>
<div class="ar" style="left:104px;top:491px"></div>
<div class="tr" style="left:120px;top:488px">Skutečná umístění zboží</div>
<div class="dh" style="left:89px;top:515px;width:11px"></div>
<div class="ar" style="left:104px;top:509px"></div>
<div class="tr" style="left:120px;top:506px">Zboží bez umístění</div>
<div class="dh" style="left:89px;top:533px;width:11px"></div>
<div class="ar" style="left:104px;top:527px"></div>
<div class="tr" style="left:120px;top:524px">Skutečná umístění zboží s rozlišovacími atributy</div>
<div class="dh" style="left:89px;top:551px;width:11px"></div>
<div class="ar" style="left:104px;top:545px"></div>
<div class="tr" style="left:120px;top:542px">Zboží s rozlišovacími atributy bez umístění</div>
<div class="dh" style="left:89px;top:569px;width:11px"></div>
<div class="ar" style="left:104px;top:563px"></div>
<div class="tr" style="left:120px;top:560px">Skutečná umístění zboží - včetně nulových</div>
<div class="dh" style="left:89px;top:587px;width:11px"></div>
<div class="ar" style="left:104px;top:581px"></div>
<div class="tr" style="left:120px;top:578px">Skutečná umístění zboží s rozlišovacími atributy - včetně</div>
<div class="dh" style="left:74px;top:605px;width:7px"></div>
<div class="pm" style="left:65px;top:601px"><i></i></div>
<svg class="fo" style="left:80px;top:598px" viewBox="0 0 16 13"><defs><linearGradient id="fg20" x1="0" y1="0" x2="1" y2="1"><stop offset="0" stop-color="#eef8fc"/><stop offset="0.4" stop-color="#8fcde4"/><stop offset="1" stop-color="#1f7fa8"/></linearGradient></defs><path d="M0.500 1.200h5.500l1 1.300h8.500v9.500h-15z" fill="#a9d6e8" stroke="#6aa9c8" stroke-width="0.600"/><path d="M0.500 3.200h15v9h-15z" fill="url(#fg20)" stroke="#3f8db5" stroke-width="0.600"/></svg>
<div class="tr" style="left:101px;top:596px">Skladové přehledy</div>
<div class="dh" style="left:89px;top:623px;width:11px"></div>
<div class="ar" style="left:104px;top:617px"></div>
<div class="tr" style="left:120px;top:614px">Seznam všech skladových výdejek</div>
<div class="dh" style="left:89px;top:641px;width:11px"></div>
<div class="ar" style="left:104px;top:635px"></div>
<div class="tr" style="left:120px;top:632px">Seznam všech skladových příjemek</div>
<div class="dh" style="left:89px;top:659px;width:11px"></div>
<div class="ar" style="left:104px;top:653px"></div>
<div class="tr" style="left:120px;top:650px">Seznam položek všech skladových příjemek</div>
<div class="dh" style="left:89px;top:677px;width:11px"></div>
<div class="ar" style="left:104px;top:671px"></div>
<div class="tr" style="left:120px;top:668px">Seznam položek všech skladových výdejek</div>
<div class="dh" style="left:89px;top:695px;width:11px"></div>
<div class="ar" style="left:104px;top:689px"></div>
<div class="tr" style="left:120px;top:686px">Seznam rozpadů položek všech skladových příjemek</div>
<div class="dh" style="left:89px;top:713px;width:11px"></div>
<div class="ar" style="left:104px;top:707px"></div>
<div class="tr" style="left:120px;top:704px">Seznam rozpadů položek všech skladových výdejek</div>
<div class="dh" style="left:89px;top:731px;width:11px"></div>
<div class="ar" style="left:104px;top:725px"></div>
<div class="tr" style="left:120px;top:722px">Poslední pohyby zboží</div>
<div class="dh" style="left:89px;top:749px;width:11px"></div>
<div class="ar" style="left:104px;top:743px"></div>
<div class="tr" style="left:120px;top:740px">Souhrnné pohyby obalů</div>
<div class="dh" style="left:89px;top:767px;width:11px"></div>
<div class="ar" style="left:104px;top:761px"></div>
<div class="tr" style="left:120px;top:758px">Skladové převody na cestě - položkově</div>
<div class="dh" style="left:89px;top:785px;width:11px"></div>
<div class="ar" style="left:104px;top:779px"></div>
<div class="tr" style="left:120px;top:776px">Skladové příjemky bez dodacích listů</div>
<div class="dh" style="left:89px;top:803px;width:11px"></div>
<div class="ar" style="left:104px;top:797px"></div>
<div class="tr" style="left:120px;top:794px">Obratovka zboží za všechny sklady</div>
<div class="dh" style="left:89px;top:821px;width:11px"></div>
<div class="ar" style="left:104px;top:815px"></div>
<div class="tr" style="left:120px;top:812px">Seznam položek rozpracovaných skladových příjemek</div>
<div class="dh" style="left:89px;top:839px;width:11px"></div>
<div class="ar" style="left:104px;top:833px"></div>
<div class="tr" style="left:120px;top:830px">Seznam položek rozpracovaných skladových výdejek</div>
<div class="dh" style="left:89px;top:857px;width:11px"></div>
<div class="ar" style="left:104px;top:851px"></div>
<div class="tr" style="left:120px;top:848px">Kontrola automatického vyskladňování materiálů do výroby</div>
</div>
<div class="abs" style="left:441px;top:48px;width:17px;height:867px;background:#f2f6fa"></div>
<div class="abs" style="left:441px;top:264px;width:17px;height:381px;background:#d6e6f3"></div>
<svg class="abs" style="left:444px;top:53px" width="10" height="8"><path d="M1 6l4-4 4 4" stroke="#111" stroke-width="1.800" fill="none"/></svg>
<svg class="abs" style="left:444px;top:902px" width="10" height="8"><path d="M1 2l4 4 4-4" stroke="#111" stroke-width="1.800" fill="none"/></svg>
<div class="abs" style="left:28px;top:916px;width:413px;height:17px;background:#f2f6fa"></div>
<div class="abs" style="left:46px;top:916px;width:304px;height:17px;background:#d6e6f3"></div>
<svg class="abs" style="left:33px;top:920px" width="8" height="10"><path d="M6 1l-4 4 4 4" stroke="#111" stroke-width="1.800" fill="none"/></svg>
<svg class="abs" style="left:429px;top:920px" width="8" height="10"><path d="M2 1l4 4-4 4" stroke="#111" stroke-width="1.800" fill="none"/></svg>
<div class="abs" style="left:441px;top:916px;width:17px;height:17px;background:#fff"></div>
<div class="abs" style="left:27px;top:936.500px;width:437px;height:1.500px;background:#9cc0e2"></div></div><div id="tbline"></div>
<div id="mdi">
<div class="gl" style="left:53.9px;top:0;width:1.6px;height:938px"></div>
<div class="gl" style="left:193.6px;top:0;width:1.6px;height:938px"></div>
<div class="gl" style="left:333.3px;top:0;width:1.6px;height:938px"></div>
<div class="gl" style="left:473.0px;top:0;width:1.6px;height:938px"></div>
<div class="gl" style="left:612.7px;top:0;width:1.6px;height:938px"></div>
<div class="gl" style="left:752.4px;top:0;width:1.6px;height:938px"></div>
<div class="gl" style="left:892.1px;top:0;width:1.6px;height:938px"></div>
<div class="gl" style="left:1031.8px;top:0;width:1.6px;height:938px"></div>
<div class="gl" style="left:0;top:138.5px;width:1216px;height:1.6px"></div>
<div class="gl" style="left:0;top:278.4px;width:1216px;height:1.6px"></div>
<div class="gl" style="left:0;top:418.3px;width:1216px;height:1.6px"></div>
<div class="gl" style="left:0;top:558.1px;width:1216px;height:1.6px"></div>
<div class="gl" style="left:0;top:698.0px;width:1216px;height:1.6px"></div>
<div class="gl" style="left:0;top:837.9px;width:1216px;height:1.6px"></div>
<div class="gl" style="left:1214px;top:0;width:2px;height:938px"></div>
<svg class="abs" style="left:892px;top:0" width="324" height="152" viewBox="1356 72 324 152">
<rect x="1357.800" y="72" width="139" height="139" fill="#004a94"/>
<circle cx="1426.300" cy="141.600" r="69.800" fill="#fff"/>
<circle cx="1426.300" cy="141.400" r="36.700" fill="#004a94"/>
<path d="M1451 142L1495 186L1471.500 210L1427 165.800z" fill="#fff"/>
<path d="M1389.600 141.900H1463M1426.600 104.700V178.100" stroke="#fff" stroke-width="1.300"/>
<rect x="1496" y="72" width="44.500" height="152" fill="#fff"/>
<rect x="1497.100" y="72.90" width="6.700" height="6.900" fill="#004a94"/>
<rect x="1497.100" y="81.63" width="6.700" height="6.900" fill="#004a94"/>
<rect x="1497.100" y="90.36" width="6.700" height="6.900" fill="#004a94"/>
<rect x="1497.100" y="99.09" width="6.700" height="6.900" fill="#004a94"/>
<rect x="1497.100" y="107.82" width="6.700" height="6.900" fill="#004a94"/>
<rect x="1497.100" y="116.55" width="6.700" height="6.900" fill="#004a94"/>
<rect x="1497.100" y="125.28" width="6.700" height="6.900" fill="#004a94"/>
<rect x="1497.100" y="134.01" width="6.700" height="6.900" fill="#004a94"/>
<rect x="1497.100" y="142.74" width="6.700" height="6.900" fill="#004a94"/>
<rect x="1497.100" y="151.47" width="6.700" height="6.900" fill="#004a94"/>
<rect x="1497.100" y="160.20" width="6.700" height="6.900" fill="#004a94"/>
<rect x="1497.100" y="168.93" width="6.700" height="6.900" fill="#004a94"/>
<rect x="1497.100" y="177.66" width="6.700" height="6.900" fill="#004a94"/>
<rect x="1497.100" y="186.39" width="6.700" height="6.900" fill="#004a94"/>
<rect x="1497.100" y="195.12" width="6.700" height="6.900" fill="#004a94"/>
<rect x="1497.100" y="203.85" width="6.700" height="6.900" fill="#004a94"/>
<rect x="1497.100" y="212.58" width="6.700" height="6.900" fill="#004a94"/>
<rect x="1497.100" y="221.31" width="6.700" height="6.900" fill="#004a94"/>
<rect x="1505.63" y="107.82" width="6.900" height="6.900" fill="#004a94"/>
<rect x="1514.36" y="107.82" width="6.900" height="6.900" fill="#004a94"/>
<rect x="1523.09" y="107.82" width="6.900" height="6.900" fill="#004a94"/>
<rect x="1531.82" y="107.82" width="6.900" height="6.900" fill="#004a94"/>
<rect x="1505.63" y="212.58" width="6.900" height="6.900" fill="#004a94"/>
<rect x="1514.36" y="212.58" width="6.900" height="6.900" fill="#004a94"/>
<rect x="1523.09" y="212.58" width="6.900" height="6.900" fill="#004a94"/>
<rect x="1531.82" y="212.58" width="6.900" height="6.900" fill="#004a94"/>
<rect x="1505.63" y="221.31" width="6.900" height="6.900" fill="#004a94"/>
<rect x="1514.36" y="221.31" width="6.900" height="6.900" fill="#004a94"/>
<rect x="1523.09" y="221.31" width="6.900" height="6.900" fill="#004a94"/>
<rect x="1531.82" y="221.31" width="6.900" height="6.900" fill="#004a94"/>
<rect x="1540.400" y="72" width="137.600" height="139" fill="#004a94"/>
<rect x="1540.400" y="212.500" width="137.600" height="20" fill="#004a94"/>
<g fill="#fff" font-family="Liberation Sans, sans-serif" font-weight="bold" font-size="20.500" letter-spacing="0.7"><text x="1546" y="100.200">CENTRÁLNÍ</text><text x="1546" y="123.800">MOZEK</text><text x="1546" y="147.400">FIRMY</text></g>
</svg>
<svg class="abs" style="left:818px;top:47px" width="31" height="33" viewBox="0 0 30 32"><defs><linearGradient id="t1g" x1="0" y1="0" x2="0" y2="1"><stop offset="0" stop-color="#fff"/><stop offset="1" stop-color="#d8d8d8"/></linearGradient></defs><path d="M3 1.500Q10 0 20 1l3.500 21q-9 3-18 2.500Q2 14 1 4q0-2 2-2.500z" fill="url(#t1g)" stroke="#bbb" stroke-width=".5"/><rect x="4.500" y="5" width="5" height="5" rx="1" fill="none" stroke="#777" stroke-width=".9"/><path d="M4 6l2.500 2.500L11 4" stroke="#1e8fe8" stroke-width="1.800" fill="none"/><rect x="6" y="14" width="6" height="5" rx="1.500" fill="none" stroke="#666" stroke-width=".9"/><path d="M13 14L23 2.500l3.500 3L16 16.500l-3.800 1z" fill="#1e9cf0"/><path d="M21.500 4l3 -3.200 3.200 3-2.700 3z" fill="#2db2ff"/><path d="M21 4.800l3.300 3 1.200-1.400-3.300-3z" fill="#666"/><ellipse cx="14" cy="29" rx="10" ry="1.500" fill="#6d8fbf" opacity=".5"/></svg>
<div class="tile" style="left:771px;top:84px;width:120px">Seznam chybějícího<br>zboží</div>
<svg class="abs" style="left:1123px;top:192px" width="34" height="28" viewBox="0 0 34 28"><rect x="0.500" y="2.500" width="9" height="5" fill="#cfcfcf"/><rect x="2.500" y="7.500" width="7" height="5.500" fill="#e52a2a"/><path d="M0.500 14.500l9-1.200v5.500l-8.500 .8z" fill="#d9d9d9"/><rect x="10" y="1" width="1.600" height="19" fill="#7a736a"/><rect x="1" y="19" width="10.500" height="1.500" fill="#7a736a"/><path d="M18.500 1.500h13q1.500 0 1.500 1.500v14.500q0 1.500-1.500 1.500h-18q-1 0-.8-1.200z" fill="#e8262a"/><path d="M20 3.500h4.800v9.500h-8.300z" fill="#fff"/><path d="M26.300 3.500h5v9.500h-5z" fill="#fff"/><circle cx="17.500" cy="19.500" r="3.200" fill="#7a736a"/><circle cx="27.300" cy="20.300" r="2.400" fill="#7a736a"/><ellipse cx="17" cy="26.500" rx="15" ry="1" fill="#5a6fa0" opacity=".45"/></svg>
<div class="tile" style="left:1079px;top:227px;width:120px">Řízení skladů</div>
<div class="win" style="left:19px;top:3px;width:684px;height:638px;box-shadow:inset 1px 0 0 #dcdcdc">
<div class="wt"><svg class="wicon" width="16" height="17" viewBox="0 0 16 17"><path d="M1.500 1.500L14 8.500L1.500 15.500z" fill="#fafafa" stroke="#fff" stroke-width="1.500" stroke-linejoin="round"/><path d="M3 13.500L12 8.500" stroke="#b8b8b8" stroke-width="1.400"/></svg><div class="cap">Seznam chybějícího zboží</div>
<div class="num" style="left:593px;top:5px">0</div>
<svg style="position:absolute;left:608px;top:6px" width="66" height="16" viewBox="0 0 66 16"><path d="M3 9.500h11" stroke="#111" stroke-width="1.100"/><rect x="28.500" y="3.500" width="10" height="10" fill="none" stroke="#111" stroke-width="1.100"/><path d="M53.500 4l9 9M62.500 4l-9 9" stroke="#111" stroke-width="2.200"/></svg>
</div>
<div class="tabon" style="left:13px;top:36px;width:115px;height:21px"></div>
<div class="page" style="left:12px;top:56px;width:520px;height:568px"></div>
<div class="abs" style="left:14px;top:56px;width:113px;height:2px;background:#f9fbfe"></div>
<div class="tabs"><span style="left:19px;top:40px">Nastavení parametrů</span><span style="left:132px;top:41px">Výběr akcí</span><span style="left:193px;top:41px">Výběr zboží</span><span style="left:261px;top:41px">Výběr skladů</span></div>
<div class="lbl" style="left:23px;top:77px">Datum dodání  <i>. . . . . .</i></div>
<div class="lbl" style="left:23px;top:101px">Vytvoření seznamu k  <i>.</i></div>
<div class="lbl" style="left:23px;top:125px">Vybrané doklady  <i>. . . .</i></div>
<div class="lbl" style="left:23px;top:149px">Cena  <i>. . . . . .</i></div>
<div class="lbl" style="left:23px;top:173px">Dodací lhůta</div>
<div class="lbl" style="left:23px;top:197px">Výběr dodavatele</div>
<div class="lbl" style="left:23px;top:221px">Zobrazení  <i>. . .</i></div>
<div class="lbl" style="left:23px;top:249px">Vypočítat procenta</div>
<div class="fld" style="left:145px;top:69px;width:118px;height:19px"><span>25.06.2018</span></div>
<svg class="chev" style="left:248px;top:75px" width="10" height="7"><path d="M1 1l4 4 4-4" stroke="#111" stroke-width="1.800" fill="none"/></svg>
<div class="fld" style="left:145px;top:93px;width:118px;height:19px"><span>25.06.2018</span></div>
<svg class="chev" style="left:248px;top:99px" width="10" height="7"><path d="M1 1l4 4 4-4" stroke="#111" stroke-width="1.800" fill="none"/></svg>
<div class="lbl" style="left:269px;top:77px">Počet dnů od data dodání  <i>. .</i></div>
<div class="fld" style="left:421px;top:69px;width:46px;height:19px"></div>
<div class="fld" style="left:145px;top:117px;width:374px;height:19px"><span style="width:354px;overflow:hidden;display:block">[Skladové příjemky, Skladové výdejky, Vydané objednávky, Přijaté objednávky]</span></div>
<svg class="chev" style="left:504px;top:123px" width="10" height="7"><path d="M1 1l4 4 4-4" stroke="#111" stroke-width="1.800" fill="none"/></svg>
<div class="fld" style="left:145px;top:141px;width:218px;height:19px"><span>Skutečná vážená pořizovací cena</span></div>
<div class="btn" style="left:544px;top:56px;width:128px;height:22px;line-height:23px">Naplnění seznamu</div>
<div class="btn" style="left:544px;top:84px;width:128px;height:22px;line-height:23px">Seznam zboží k obj.</div>
<div class="abs" style="left:25px;top:375px;width:120px;height:31px;border:1px solid #d5e0f4"></div>
<div class="lbl" style="left:29px;top:368px;background:#f9fbfe;padding:0 2px">Způsob zobrazení</div>
<div class="abs" style="left:32px;top:386px;width:13px;height:13px;border-radius:7px;border:1px solid #8a8a8a;background:#fff"><div style="position:absolute;left:2px;top:2px;width:7px;height:7px;border-radius:4px;background:#555"></div></div>
<div class="lbl" style="left:50px;top:386px">Součtově</div>
</div>
<div class="win" style="left:108px;top:151px;width:976px;height:583px;box-shadow:inset 1px 0 0 #d6d6d6">
<div class="wt"><svg class="wicon" width="16" height="17" viewBox="0 0 16 17"><path d="M1.500 1.500L14 8.500L1.500 15.500z" fill="#fafafa" stroke="#fff" stroke-width="1.500" stroke-linejoin="round"/><path d="M3 13.500L12 8.500" stroke="#b8b8b8" stroke-width="1.400"/></svg><div class="cap">Součtovaný seznam zboží pro objednání dle rozlišovacích atributů</div>
<div class="num" style="left:877px;top:5px">11</div>
<svg style="position:absolute;left:899px;top:6px" width="66" height="16" viewBox="0 0 66 16"><path d="M3 9.500h11" stroke="#111" stroke-width="1.100"/><rect x="28.500" y="3.500" width="10" height="10" fill="none" stroke="#111" stroke-width="1.100"/><path d="M53.500 4l9 9M62.500 4l-9 9" stroke="#111" stroke-width="2.200"/></svg>
</div>
<div class="tabon" style="left:12px;top:36px;width:53px;height:21px"></div>
<div class="page" style="left:12px;top:56px;width:812px;height:482px"></div>
<div class="abs" style="left:13px;top:56px;width:51px;height:2px;background:#f9fbfe"></div>
<div class="tabs"><span style="left:19px;top:40px">Seznam</span><span style="left:69px;top:41px">Detail</span><span style="left:114px;top:41px">Stav</span><span style="left:152px;top:41px">Prodej</span><span style="left:199px;top:41px">Graf</span></div>
<div class="abs" style="left:24.6px;top:68.5px;width:786px;height:457px;background:#fafcff;border:1px solid #d5e0f4"></div>
<div class="abs" style="left:25.6px;top:69.5px;width:784px;height:18px;background:#fff">
<div class="th" style="left:0.0px;width:184.4px">Kód zboží</div>
<div class="th" style="left:184.4px;width:298.0px">Název zboží</div>
<div class="th" style="left:482.4px;width:43.4px">MJ</div>
<div class="th" style="left:525.8px;width:80.9px">Počáteční stav</div>
<div class="th" style="left:606.7px;width:73.9px">K objednání</div>
<div class="th" style="left:680.6px;width:86.8px">Identifikace d…</div>
</div>
<div class="td" style="left:25.6px;top:87.5px;width:184.4px;background:#00486f;color:#fff;padding-left:2px;">PVRSTC</div>
<div class="td" style="left:211.0px;top:87.5px;width:297.0px;background:#00486f;color:#fff;padding-left:2px;">Přední vidlice RST Capa T6</div>
<div class="td" style="left:509.0px;top:87.5px;width:42.4px;background:#00486f;color:#fff;padding-left:2px;">ks</div>
<div class="td" style="left:552.4px;top:87.5px;width:79.9px;background:#00486f;color:#fff;text-align:right;padding-right:4px;">61,00</div>
<div class="td" style="left:633.3px;top:87.5px;width:72.9px;background:#00486f;color:#fff;text-align:right;padding-right:4px;">110,00</div>
<div class="td" style="left:707.2px;top:87.5px;width:85.8px;background:#00486f;color:#fff;padding-left:2px;">VELBIKE</div>
<div class="td" style="left:25.6px;top:105.5px;width:184.4px;background:#cbdcfc;color:#111;padding-left:2px;">PVMARE</div>
<div class="td" style="left:211.0px;top:105.5px;width:297.0px;background:#dce7fd;color:#111;padding-left:2px;">Přední vidlice Marzocchi MX Comp ETA</div>
<div class="td" style="left:509.0px;top:105.5px;width:42.4px;background:#cbdcfc;color:#111;padding-left:2px;">ks</div>
<div class="td" style="left:552.4px;top:105.5px;width:79.9px;background:#cbdcfc;color:#111;text-align:right;padding-right:4px;">0,00</div>
<div class="td" style="left:633.3px;top:105.5px;width:72.9px;background:#fafcff;color:#111;text-align:right;padding-right:4px;">15,00</div>
<div class="td" style="left:707.2px;top:105.5px;width:85.8px;background:#fafcff;color:#111;padding-left:2px;">VELBIKE</div>
<div class="td" style="left:25.6px;top:123.5px;width:184.4px;background:#dfe9fd;color:#111;padding-left:2px;">PVMART</div>
<div class="td" style="left:211.0px;top:123.5px;width:297.0px;background:#e8f0fe;color:#111;padding-left:2px;">Přední vidlice Marzocchi MX Pro ETA + TAS</div>
<div class="td" style="left:509.0px;top:123.5px;width:42.4px;background:#dfe9fd;color:#111;padding-left:2px;">ks</div>
<div class="td" style="left:552.4px;top:123.5px;width:79.9px;background:#dfe9fd;color:#111;text-align:right;padding-right:4px;">15,00</div>
<div class="td" style="left:633.3px;top:123.5px;width:72.9px;background:#ffffff;color:#111;text-align:right;padding-right:4px;">17,00</div>
<div class="td" style="left:707.2px;top:123.5px;width:85.8px;background:#ffffff;color:#111;padding-left:2px;"></div>
<div class="td" style="left:25.6px;top:141.5px;width:184.4px;background:#cbdcfc;color:#111;padding-left:2px;">HSFSAI</div>
<div class="td" style="left:211.0px;top:141.5px;width:297.0px;background:#dce7fd;color:#111;padding-left:2px;"></div>
<div class="td" style="left:509.0px;top:141.5px;width:42.4px;background:#cbdcfc;color:#111;padding-left:2px;"></div>
<div class="td" style="left:552.4px;top:141.5px;width:79.9px;background:#cbdcfc;color:#111;text-align:right;padding-right:4px;"></div>
<div class="td" style="left:633.3px;top:141.5px;width:72.9px;background:#fafcff;color:#111;text-align:right;padding-right:4px;"></div>
<div class="td" style="left:707.2px;top:141.5px;width:85.8px;background:#fafcff;color:#111;padding-left:2px;"></div>
<div class="td" style="left:25.6px;top:159.5px;width:184.4px;background:#dfe9fd;color:#111;padding-left:2px;">PSM4</div>
<div class="td" style="left:211.0px;top:159.5px;width:297.0px;background:#e8f0fe;color:#111;padding-left:2px;"></div>
<div class="td" style="left:509.0px;top:159.5px;width:42.4px;background:#dfe9fd;color:#111;padding-left:2px;"></div>
<div class="td" style="left:552.4px;top:159.5px;width:79.9px;background:#dfe9fd;color:#111;text-align:right;padding-right:4px;"></div>
<div class="td" style="left:633.3px;top:159.5px;width:72.9px;background:#ffffff;color:#111;text-align:right;padding-right:4px;"></div>
<div class="td" style="left:707.2px;top:159.5px;width:85.8px;background:#ffffff;color:#111;padding-left:2px;"></div>
<div class="td" style="left:25.6px;top:177.5px;width:184.4px;background:#cbdcfc;color:#111;padding-left:2px;">PSM55</div>
<div class="td" style="left:211.0px;top:177.5px;width:297.0px;background:#dce7fd;color:#111;padding-left:2px;"></div>
<div class="td" style="left:509.0px;top:177.5px;width:42.4px;background:#cbdcfc;color:#111;padding-left:2px;"></div>
<div class="td" style="left:552.4px;top:177.5px;width:79.9px;background:#cbdcfc;color:#111;text-align:right;padding-right:4px;"></div>
<div class="td" style="left:633.3px;top:177.5px;width:72.9px;background:#fafcff;color:#111;text-align:right;padding-right:4px;"></div>
<div class="td" style="left:707.2px;top:177.5px;width:85.8px;background:#fafcff;color:#111;padding-left:2px;"></div>
<div class="td" style="left:25.6px;top:195.5px;width:184.4px;background:#dfe9fd;color:#111;padding-left:2px;">PSLX5</div>
<div class="td" style="left:211.0px;top:195.5px;width:297.0px;background:#e8f0fe;color:#111;padding-left:2px;"></div>
<div class="td" style="left:509.0px;top:195.5px;width:42.4px;background:#dfe9fd;color:#111;padding-left:2px;"></div>
<div class="td" style="left:552.4px;top:195.5px;width:79.9px;background:#dfe9fd;color:#111;text-align:right;padding-right:4px;"></div>
<div class="td" style="left:633.3px;top:195.5px;width:72.9px;background:#ffffff;color:#111;text-align:right;padding-right:4px;"></div>
<div class="td" style="left:707.2px;top:195.5px;width:85.8px;background:#ffffff;color:#111;padding-left:2px;"></div>
<div class="td" style="left:25.6px;top:213.5px;width:184.4px;background:#cbdcfc;color:#111;padding-left:2px;">PSXT</div>
<div class="td" style="left:211.0px;top:213.5px;width:297.0px;background:#dce7fd;color:#111;padding-left:2px;"></div>
<div class="td" style="left:509.0px;top:213.5px;width:42.4px;background:#cbdcfc;color:#111;padding-left:2px;"></div>
<div class="td" style="left:552.4px;top:213.5px;width:79.9px;background:#cbdcfc;color:#111;text-align:right;padding-right:4px;"></div>
<div class="td" style="left:633.3px;top:213.5px;width:72.9px;background:#fafcff;color:#111;text-align:right;padding-right:4px;"></div>
<div class="td" style="left:707.2px;top:213.5px;width:85.8px;background:#fafcff;color:#111;padding-left:2px;"></div>
<div class="td" style="left:25.6px;top:231.5px;width:184.4px;background:#dfe9fd;color:#111;padding-left:2px;">PSXT5</div>
<div class="td" style="left:211.0px;top:231.5px;width:297.0px;background:#e8f0fe;color:#111;padding-left:2px;"></div>
<div class="td" style="left:509.0px;top:231.5px;width:42.4px;background:#dfe9fd;color:#111;padding-left:2px;"></div>
<div class="td" style="left:552.4px;top:231.5px;width:79.9px;background:#dfe9fd;color:#111;text-align:right;padding-right:4px;"></div>
<div class="td" style="left:633.3px;top:231.5px;width:72.9px;background:#ffffff;color:#111;text-align:right;padding-right:4px;"></div>
<div class="td" style="left:707.2px;top:231.5px;width:85.8px;background:#ffffff;color:#111;padding-left:2px;"></div>
<div class="td" style="left:25.6px;top:249.5px;width:184.4px;background:#cbdcfc;color:#111;padding-left:2px;">SSVPC</div>
<div class="td" style="left:211.0px;top:249.5px;width:297.0px;background:#dce7fd;color:#111;padding-left:2px;"></div>
<div class="td" style="left:509.0px;top:249.5px;width:42.4px;background:#cbdcfc;color:#111;padding-left:2px;"></div>
<div class="td" style="left:552.4px;top:249.5px;width:79.9px;background:#cbdcfc;color:#111;text-align:right;padding-right:4px;"></div>
<div class="td" style="left:633.3px;top:249.5px;width:72.9px;background:#fafcff;color:#111;text-align:right;padding-right:4px;"></div>
<div class="td" style="left:707.2px;top:249.5px;width:85.8px;background:#fafcff;color:#111;padding-left:2px;"></div>
<div class="td" style="left:25.6px;top:267.5px;width:184.4px;background:#dfe9fd;color:#111;padding-left:2px;">CKA8</div>
<div class="td" style="left:211.0px;top:267.5px;width:297.0px;background:#e8f0fe;color:#111;padding-left:2px;"></div>
<div class="td" style="left:509.0px;top:267.5px;width:42.4px;background:#dfe9fd;color:#111;padding-left:2px;"></div>
<div class="td" style="left:552.4px;top:267.5px;width:79.9px;background:#dfe9fd;color:#111;text-align:right;padding-right:4px;"></div>
<div class="td" style="left:633.3px;top:267.5px;width:72.9px;background:#ffffff;color:#111;text-align:right;padding-right:4px;"></div>
<div class="td" style="left:707.2px;top:267.5px;width:85.8px;background:#ffffff;color:#111;padding-left:2px;"></div>
<div class="abs" style="left:793.0px;top:87.5px;width:17.500px;height:420px;background:#d6e6f3"></div>
<svg class="abs" style="left:797px;top:74px" width="10" height="8"><path d="M1 6l4-4 4 4" stroke="#111" stroke-width="1.800" fill="none"/></svg>
<div class="abs" style="left:25.6px;top:507.6px;width:767px;height:17.500px;background:#f2f6fa"></div>
<div class="abs" style="left:42.6px;top:507.6px;width:17.500px;height:17.500px;background:#d6e6f3"></div>
<svg class="abs" style="left:30px;top:511px" width="8" height="10"><path d="M6 1l-4 4 4 4" stroke="#111" stroke-width="1.800" fill="none"/></svg>
<div class="abs" style="left:12px;top:545px;width:812px;height:25px;border:1px solid #a0a0a0;background:#fff"><span style="position:absolute;left:6px;top:5px;font-size:11.500px;letter-spacing:-0.1px;white-space:nowrap">Vytvořeno uživatelem</span></div>
<div class="btn" style="left:836px;top:56px;width:128px;height:22px;line-height:23px">Průběh stavu zásob</div>
<div class="btn" style="left:836px;top:84px;width:128px;height:22px;line-height:23px">Číselník zboží</div>
<div class="btn" style="left:836px;top:112px;width:128px;height:22px;line-height:23px">Podmínky - nákup</div>
<div class="btn" style="left:836px;top:140px;width:128px;height:22px;line-height:23px"></div>
</div>
<div class="win" style="left:215px;top:296px;width:977px;height:637px;background:#fff;box-shadow:inset 1px 0 0 #3a74a8">
<div class="wt" style="background:#1c4565;height:28px;border-top:1px solid #3b6384;border-left:1px solid #3b6384;border-bottom:none"><svg class="wicon" style="left:6px;top:5px" width="16" height="18" viewBox="0 0 16 18"><path d="M1 1L15 9L1 17z" fill="#fff"/><path d="M2.500 15L12.500 9.300" stroke="#c8c8c8" stroke-width="1.600"/></svg><div class="cap" style="color:#fff;left:25px;top:6px">Seznam zboží pro objednání - průběh stavu zásob</div>
<div class="num" style="left:886px;top:5px;color:#fff">1</div>
<svg style="position:absolute;left:901px;top:6px" width="66" height="16" viewBox="0 0 66 16"><path d="M3 8.500h11" stroke="#fff" stroke-width="1.200"/><rect x="28.500" y="3.500" width="10" height="10" fill="none" stroke="#fff" stroke-width="1.200"/><path d="M54 3.500l10 10M64 3.500l-10 10" stroke="#fff" stroke-width="1.300"/></svg>
</div>
<div class="tabon" style="left:61px;top:36px;width:46px;height:21px"></div>
<div class="page" style="left:12px;top:56px;width:954px;height:569px"></div>
<div class="abs" style="left:62px;top:56px;width:44px;height:2px;background:#f9fbfe"></div>
<div class="tabs"><span style="left:19px;top:41px">Seznam</span><span style="left:72px;top:40px">Graf</span></div>
<div class="abs" style="left:24px;top:68px;width:930px;height:546px;background:#fff;border:1px solid #555"></div>
<svg class="abs" style="left:25px;top:69px" width="928" height="544" viewBox="704 437 928 544" font-family="Liberation Sans, sans-serif">
<path d="M750 833.0H1597.500" stroke="#d4d4d4" stroke-width="1.200"/>
<text x="744.500" y="836.6" font-size="8.500" text-anchor="end" fill="#111">8</text>
<path d="M746.500 833.0H750" stroke="#333" stroke-width="1"/>
<path d="M750 818.2H1597.500" stroke="#d4d4d4" stroke-width="1.200"/>
<text x="744.500" y="821.8" font-size="8.500" text-anchor="end" fill="#111">10</text>
<path d="M746.500 818.2H750" stroke="#333" stroke-width="1"/>
<path d="M750 803.5H1597.500" stroke="#d4d4d4" stroke-width="1.200"/>
<text x="744.500" y="807.1" font-size="8.500" text-anchor="end" fill="#111">12</text>
<path d="M746.500 803.5H750" stroke="#333" stroke-width="1"/>
<path d="M750 788.7H1597.500" stroke="#d4d4d4" stroke-width="1.200"/>
<text x="744.500" y="792.3" font-size="8.500" text-anchor="end" fill="#111">14</text>
<path d="M746.500 788.7H750" stroke="#333" stroke-width="1"/>
<path d="M750 774.0H1597.500" stroke="#d4d4d4" stroke-width="1.200"/>
<text x="744.500" y="777.6" font-size="8.500" text-anchor="end" fill="#111">16</text>
<path d="M746.500 774.0H750" stroke="#333" stroke-width="1"/>
<path d="M750 759.2H1597.500" stroke="#d4d4d4" stroke-width="1.200"/>
<text x="744.500" y="762.8" font-size="8.500" text-anchor="end" fill="#111">18</text>
<path d="M746.500 759.2H750" stroke="#333" stroke-width="1"/>
<path d="M750 744.5H1597.500" stroke="#d4d4d4" stroke-width="1.200"/>
<text x="744.500" y="748.1" font-size="8.500" text-anchor="end" fill="#111">20</text>
<path d="M746.500 744.5H750" stroke="#333" stroke-width="1"/>
<path d="M750 729.7H1597.500" stroke="#d4d4d4" stroke-width="1.200"/>
<text x="744.500" y="733.3" font-size="8.500" text-anchor="end" fill="#111">22</text>
<path d="M746.500 729.7H750" stroke="#333" stroke-width="1"/>
<path d="M750 715.0H1597.500" stroke="#d4d4d4" stroke-width="1.200"/>
<text x="744.500" y="718.6" font-size="8.500" text-anchor="end" fill="#111">24</text>
<path d="M746.500 715.0H750" stroke="#333" stroke-width="1"/>
<path d="M750 700.2H1597.500" stroke="#d4d4d4" stroke-width="1.200"/>
<text x="744.500" y="703.8" font-size="8.500" text-anchor="end" fill="#111">26</text>
<path d="M746.500 700.2H750" stroke="#333" stroke-width="1"/>
<path d="M750 685.4H1597.500" stroke="#d4d4d4" stroke-width="1.200"/>
<text x="744.500" y="689.0" font-size="8.500" text-anchor="end" fill="#111">28</text>
<path d="M746.500 685.4H750" stroke="#333" stroke-width="1"/>
<path d="M750 670.7H1597.500" stroke="#d4d4d4" stroke-width="1.200"/>
<text x="744.500" y="674.3" font-size="8.500" text-anchor="end" fill="#111">30</text>
<path d="M746.500 670.7H750" stroke="#333" stroke-width="1"/>
<path d="M750 655.9H1597.500" stroke="#d4d4d4" stroke-width="1.200"/>
<text x="744.500" y="659.5" font-size="8.500" text-anchor="end" fill="#111">32</text>
<path d="M746.500 655.9H750" stroke="#333" stroke-width="1"/>
<path d="M750 641.2H1597.500" stroke="#d4d4d4" stroke-width="1.200"/>
<text x="744.500" y="644.8" font-size="8.500" text-anchor="end" fill="#111">34</text>
<path d="M746.500 641.2H750" stroke="#333" stroke-width="1"/>
<path d="M750 626.4H1597.500" stroke="#d4d4d4" stroke-width="1.200"/>
<text x="744.500" y="630.0" font-size="8.500" text-anchor="end" fill="#111">36</text>
<path d="M746.500 626.4H750" stroke="#333" stroke-width="1"/>
<path d="M750 611.7H1597.500" stroke="#d4d4d4" stroke-width="1.200"/>
<text x="744.500" y="615.3" font-size="8.500" text-anchor="end" fill="#111">38</text>
<path d="M746.500 611.7H750" stroke="#333" stroke-width="1"/>
<path d="M750 596.9H1597.500" stroke="#d4d4d4" stroke-width="1.200"/>
<text x="744.500" y="600.5" font-size="8.500" text-anchor="end" fill="#111">40</text>
<path d="M746.500 596.9H750" stroke="#333" stroke-width="1"/>
<path d="M750 582.1H1597.500" stroke="#d4d4d4" stroke-width="1.200"/>
<text x="744.500" y="585.7" font-size="8.500" text-anchor="end" fill="#111">42</text>
<path d="M746.500 582.1H750" stroke="#333" stroke-width="1"/>
<path d="M750 567.4H1597.500" stroke="#d4d4d4" stroke-width="1.200"/>
<text x="744.500" y="571.0" font-size="8.500" text-anchor="end" fill="#111">44</text>
<path d="M746.500 567.4H750" stroke="#333" stroke-width="1"/>
<path d="M747 840.4H749.500" stroke="#c4c4c4" stroke-width=".8"/>
<path d="M747 836.7H749.500" stroke="#c4c4c4" stroke-width=".8"/>
<path d="M747 833.0H749.500" stroke="#c4c4c4" stroke-width=".8"/>
<path d="M747 829.3H749.500" stroke="#c4c4c4" stroke-width=".8"/>
<path d="M747 825.6H749.500" stroke="#c4c4c4" stroke-width=".8"/>
<path d="M747 821.9H749.500" stroke="#c4c4c4" stroke-width=".8"/>
<path d="M747 818.2H749.500" stroke="#c4c4c4" stroke-width=".8"/>
<path d="M747 814.6H749.500" stroke="#c4c4c4" stroke-width=".8"/>
<path d="M747 810.9H749.500" stroke="#c4c4c4" stroke-width=".8"/>
<path d="M747 807.2H749.500" stroke="#c4c4c4" stroke-width=".8"/>
<path d="M747 803.5H749.500" stroke="#c4c4c4" stroke-width=".8"/>
<path d="M747 799.8H749.500" stroke="#c4c4c4" stroke-width=".8"/>
<path d="M747 796.1H749.500" stroke="#c4c4c4" stroke-width=".8"/>
<path d="M747 792.4H749.500" stroke="#c4c4c4" stroke-width=".8"/>
<path d="M747 788.7H749.500" stroke="#c4c4c4" stroke-width=".8"/>
<path d="M747 785.0H749.500" stroke="#c4c4c4" stroke-width=".8"/>
<path d="M747 781.4H749.500" stroke="#c4c4c4" stroke-width=".8"/>
<path d="M747 777.7H749.500" stroke="#c4c4c4" stroke-width=".8"/>
<path d="M747 774.0H749.500" stroke="#c4c4c4" stroke-width=".8"/>
<path d="M747 770.3H749.500" stroke="#c4c4c4" stroke-width=".8"/>
<path d="M747 766.6H749.500" stroke="#c4c4c4" stroke-width=".8"/>
<path d="M747 762.9H749.500" stroke="#c4c4c4" stroke-width=".8"/>
<path d="M747 759.2H749.500" stroke="#c4c4c4" stroke-width=".8"/>
<path d="M747 755.5H749.500" stroke="#c4c4c4" stroke-width=".8"/>
<path d="M747 751.8H749.500" stroke="#c4c4c4" stroke-width=".8"/>
<path d="M747 748.2H749.500" stroke="#c4c4c4" stroke-width=".8"/>
<path d="M747 744.5H749.500" stroke="#c4c4c4" stroke-width=".8"/>
<path d="M747 740.8H749.500" stroke="#c4c4c4" stroke-width=".8"/>
<path d="M747 737.1H749.500" stroke="#c4c4c4" stroke-width=".8"/>
<path d="M747 733.4H749.500" stroke="#c4c4c4" stroke-width=".8"/>
<path d="M747 729.7H749.500" stroke="#c4c4c4" stroke-width=".8"/>
<path d="M747 726.0H749.500" stroke="#c4c4c4" stroke-width=".8"/>
<path d="M747 722.3H749.500" stroke="#c4c4c4" stroke-width=".8"/>
<path d="M747 718.6H749.500" stroke="#c4c4c4" stroke-width=".8"/>
<path d="M747 715.0H749.500" stroke="#c4c4c4" stroke-width=".8"/>
<path d="M747 711.3H749.500" stroke="#c4c4c4" stroke-width=".8"/>
<path d="M747 707.6H749.500" stroke="#c4c4c4" stroke-width=".8"/>
<path d="M747 703.9H749.500" stroke="#c4c4c4" stroke-width=".8"/>
<path d="M747 700.2H749.500" stroke="#c4c4c4" stroke-width=".8"/>
<path d="M747 696.5H749.500" stroke="#c4c4c4" stroke-width=".8"/>
<path d="M747 692.8H749.500" stroke="#c4c4c4" stroke-width=".8"/>
<path d="M747 689.1H749.500" stroke="#c4c4c4" stroke-width=".8"/>
<path d="M747 685.4H749.500" stroke="#c4c4c4" stroke-width=".8"/>
<path d="M747 681.8H749.500" stroke="#c4c4c4" stroke-width=".8"/>
<path d="M747 678.1H749.500" stroke="#c4c4c4" stroke-width=".8"/>
<path d="M747 674.4H749.500" stroke="#c4c4c4" stroke-width=".8"/>
<path d="M747 670.7H749.500" stroke="#c4c4c4" stroke-width=".8"/>
<path d="M747 667.0H749.500" stroke="#c4c4c4" stroke-width=".8"/>
<path d="M747 663.3H749.500" stroke="#c4c4c4" stroke-width=".8"/>
<path d="M747 659.6H749.500" stroke="#c4c4c4" stroke-width=".8"/>
<path d="M747 655.9H749.500" stroke="#c4c4c4" stroke-width=".8"/>
<path d="M747 652.2H749.500" stroke="#c4c4c4" stroke-width=".8"/>
<path d="M747 648.5H749.500" stroke="#c4c4c4" stroke-width=".8"/>
<path d="M747 644.9H749.500" stroke="#c4c4c4" stroke-width=".8"/>
<path d="M747 641.2H749.500" stroke="#c4c4c4" stroke-width=".8"/>
<path d="M747 637.5H749.500" stroke="#c4c4c4" stroke-width=".8"/>
<path d="M747 633.8H749.500" stroke="#c4c4c4" stroke-width=".8"/>
<path d="M747 630.1H749.500" stroke="#c4c4c4" stroke-width=".8"/>
<path d="M747 626.4H749.500" stroke="#c4c4c4" stroke-width=".8"/>
<path d="M747 622.7H749.500" stroke="#c4c4c4" stroke-width=".8"/>
<path d="M747 619.0H749.500" stroke="#c4c4c4" stroke-width=".8"/>
<path d="M747 615.3H749.500" stroke="#c4c4c4" stroke-width=".8"/>
<path d="M747 611.7H749.500" stroke="#c4c4c4" stroke-width=".8"/>
<path d="M747 608.0H749.500" stroke="#c4c4c4" stroke-width=".8"/>
<path d="M747 604.3H749.500" stroke="#c4c4c4" stroke-width=".8"/>
<path d="M747 600.6H749.500" stroke="#c4c4c4" stroke-width=".8"/>
<path d="M747 596.9H749.500" stroke="#c4c4c4" stroke-width=".8"/>
<path d="M747 593.2H749.500" stroke="#c4c4c4" stroke-width=".8"/>
<path d="M747 589.5H749.500" stroke="#c4c4c4" stroke-width=".8"/>
<path d="M747 585.8H749.500" stroke="#c4c4c4" stroke-width=".8"/>
<path d="M747 582.1H749.500" stroke="#c4c4c4" stroke-width=".8"/>
<path d="M747 578.5H749.500" stroke="#c4c4c4" stroke-width=".8"/>
<path d="M747 574.8H749.500" stroke="#c4c4c4" stroke-width=".8"/>
<path d="M747 571.1H749.500" stroke="#c4c4c4" stroke-width=".8"/>
<path d="M747 567.4H749.500" stroke="#c4c4c4" stroke-width=".8"/>
<path d="M749.700 566.500V842.500M748.700 841.700H1597.500" stroke="#111" stroke-width="1.900" fill="none"/>
<text x="750.7" y="854.300" font-size="8.500" text-anchor="middle" fill="#111">22.05.2017</text>
<path d="M750.7 842.500v3" stroke="#333" stroke-width="1"/>
<text x="810.1" y="854.300" font-size="8.500" text-anchor="middle" fill="#111">19.06.2017</text>
<path d="M810.1 842.500v3" stroke="#333" stroke-width="1"/>
<text x="939.5" y="854.300" font-size="8.500" text-anchor="middle" fill="#111">19.08.2017</text>
<path d="M939.5 842.500v3" stroke="#333" stroke-width="1"/>
<text x="1043.4" y="854.300" font-size="8.500" text-anchor="middle" fill="#111">07.10.2017</text>
<path d="M1043.4 842.500v3" stroke="#333" stroke-width="1"/>
<text x="1100.7" y="854.300" font-size="8.500" text-anchor="middle" fill="#111">03.11.2017</text>
<path d="M1100.7 842.500v3" stroke="#333" stroke-width="1"/>
<text x="1202.5" y="854.300" font-size="8.500" text-anchor="middle" fill="#111">21.12.2017</text>
<path d="M1202.5 842.500v3" stroke="#333" stroke-width="1"/>
<text x="1268.2" y="854.300" font-size="8.500" text-anchor="middle" fill="#111">21.01.2018</text>
<path d="M1268.2 842.500v3" stroke="#333" stroke-width="1"/>
<text x="1365.8" y="854.300" font-size="8.500" text-anchor="middle" fill="#111">08.03.2018</text>
<path d="M1365.8 842.500v3" stroke="#333" stroke-width="1"/>
<text x="1423.1" y="854.300" font-size="8.500" text-anchor="middle" fill="#111">04.04.2018</text>
<path d="M1423.1 842.500v3" stroke="#333" stroke-width="1"/>
<text x="1512.1" y="854.300" font-size="8.500" text-anchor="middle" fill="#111">16.05.2018</text>
<path d="M1512.1 842.500v3" stroke="#333" stroke-width="1"/>
<text x="1592.7" y="854.300" font-size="8.500" text-anchor="middle" fill="#111">23.06.2018</text>
<path d="M1592.7 842.500v3" stroke="#333" stroke-width="1"/>
<path d="M765.5 842.500v2" stroke="#bdbdbd" stroke-width=".8"/>
<path d="M780.4 842.500v2" stroke="#bdbdbd" stroke-width=".8"/>
<path d="M795.2 842.500v2" stroke="#bdbdbd" stroke-width=".8"/>
<path d="M841.9 842.500v2" stroke="#bdbdbd" stroke-width=".8"/>
<path d="M873.7 842.500v2" stroke="#bdbdbd" stroke-width=".8"/>
<path d="M905.5 842.500v2" stroke="#bdbdbd" stroke-width=".8"/>
<path d="M971.3 842.500v2" stroke="#bdbdbd" stroke-width=".8"/>
<path d="M1003.1 842.500v2" stroke="#bdbdbd" stroke-width=".8"/>
<path d="M1068.8 842.500v2" stroke="#bdbdbd" stroke-width=".8"/>
<path d="M1132.5 842.500v2" stroke="#bdbdbd" stroke-width=".8"/>
<path d="M1166.4 842.500v2" stroke="#bdbdbd" stroke-width=".8"/>
<path d="M1234.3 842.500v2" stroke="#bdbdbd" stroke-width=".8"/>
<path d="M1300.0 842.500v2" stroke="#bdbdbd" stroke-width=".8"/>
<path d="M1331.9 842.500v2" stroke="#bdbdbd" stroke-width=".8"/>
<path d="M1397.6 842.500v2" stroke="#bdbdbd" stroke-width=".8"/>
<path d="M1454.9 842.500v2" stroke="#bdbdbd" stroke-width=".8"/>
<path d="M1482.4 842.500v2" stroke="#bdbdbd" stroke-width=".8"/>
<path d="M1544.0 842.500v2" stroke="#bdbdbd" stroke-width=".8"/>
<path d="M1573.6 842.500v2" stroke="#bdbdbd" stroke-width=".8"/>
<path d="M750.5 729.7H795.5V737.1H810.5V759.2H822.6V766.6H838.0V774.0H861.3V781.4H938.8V803.5H969.0V796.1H1042.7V825.6H1068.3V840.4H1100.2V788.7H1139.7V715.0H1201.4V707.6H1267.2V641.2H1366.5V611.7H1396.3V582.1H1400.8V567.4H1423.4V582.1H1512.5V596.9H1592.7V574.8H1597.2V567.4V566.4" stroke="#ff0000" stroke-width="2.200" fill="none" stroke-linejoin="miter"/>
<text x="1159" y="558.700" font-size="13" font-weight="bold" text-anchor="middle" fill="#111">Průběh stavu zásob</text>
<text x="1173" y="864.500" font-size="8.500" font-weight="bold" text-anchor="middle" fill="#111">Datum</text>
<text transform="translate(721,692) rotate(-90)" font-size="8.500" font-weight="bold" text-anchor="middle" fill="#111">Stav</text>
</svg>
<div class="abs" style="left:12px;top:509px;width:14px;height:2px;background:#fff"></div>
</div>
</div>
</body></html>
